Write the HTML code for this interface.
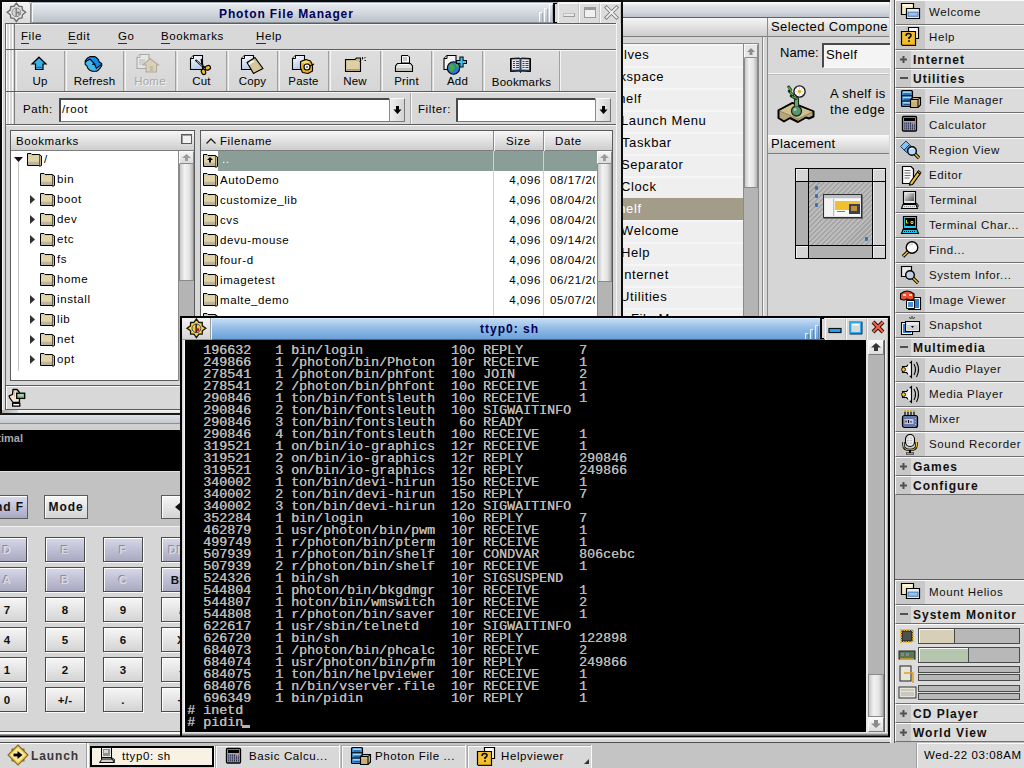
<!DOCTYPE html>
<html><head><meta charset="utf-8"><style>
*{margin:0;padding:0;box-sizing:border-box}
html,body{width:1024px;height:768px;overflow:hidden}
body{position:relative;background:#c0c0c0;font-family:"Liberation Sans",sans-serif;font-size:13px;color:#000}
.a{position:absolute}
.t{position:absolute;white-space:nowrap;line-height:11px;font-size:11.5px;letter-spacing:.6px}
.b{position:absolute;white-space:nowrap;line-height:13px;font-size:12px;font-weight:bold;letter-spacing:1px}
.bev{position:absolute;border-top:1px solid #fafafa;border-left:1px solid #fafafa;border-right:1px solid #8c8c8c;border-bottom:1px solid #8c8c8c}
.sunk{position:absolute;border-top:1px solid #6c6c6c;border-left:1px solid #6c6c6c;border-right:1px solid #f4f4f4;border-bottom:1px solid #f4f4f4}
.grip{position:absolute;left:6px;width:9px;background:repeating-linear-gradient(90deg,#fcfcfc 0 1px,#d6d6d6 1px 3px);border-right:1px solid #7c7c7c}
.hdr{position:absolute;background:linear-gradient(#f6f6f6,#e2e2e2 50%,#cdcdcd);border-bottom:1px solid #7e7e7e}
.vsb{position:absolute;background:linear-gradient(90deg,#c8c8c8,#f2f2f2 35%,#e4e4e4 70%,#b4b4b4);border:1px solid #8a8a8a}
.trk{position:absolute;background:#b4b4b4}
.term{position:absolute;font-family:"Liberation Mono",monospace;font-size:13.33px;line-height:12px;color:#bababa;text-shadow:.4px 0 0 #bababa;white-space:pre}
svg{position:absolute;overflow:visible}
</style></head><body>
<div class="a" style="left:620px;top:0px;width:270px;height:320px;background:#d6d6d6"></div>
<div class="a" style="left:620px;top:0px;width:270px;height:2px;background:#141414"></div>
<div class="a" style="left:623px;top:2px;width:266px;height:16px;background:linear-gradient(#f6f8fa,#e0e3e8 20%,#d2d6dc 70%,#bcc0c8);border-top:1px solid #fafafa;border-bottom:1px solid #5e6268"></div>
<div class="hdr" style="left:622px;top:18px;width:145px;height:19px"></div>
<div class="a" style="left:767px;top:18px;width:1px;height:300px;background:#8a8a8a"></div>
<div class="a" style="left:762px;top:37px;width:1px;height:280px;background:#8a8a8a"></div>
<div class="a" style="left:763px;top:37px;width:1px;height:280px;background:#f4f4f4"></div>
<div class="hdr" style="left:768px;top:18px;width:121px;height:19px"></div>
<div class="t" style="left:771px;top:21px;font-size:13px;line-height:12px;letter-spacing:.4px">Selected Compone</div>
<div class="a" style="left:620px;top:43px;width:124px;height:276px;background:#8a8a8a"></div>
<div class="a" style="left:623px;top:44px;width:120px;height:275px;overflow:hidden">
<div class="a" style="left:0px;top:0px;width:120px;height:22px;background:#efefef;border-top:2px solid #f6f6f6"></div>
<div class="t" style="left:-24px;top:5px;font-size:13px;line-height:12px;letter-spacing:.6px;color:#000">Shelves</div>
<div class="a" style="left:0px;top:22px;width:120px;height:22px;background:#efefef;border-top:2px solid #f6f6f6"></div>
<div class="t" style="left:-29px;top:27px;font-size:13px;line-height:12px;letter-spacing:.6px;color:#000">Workspace</div>
<div class="a" style="left:0px;top:44px;width:120px;height:22px;background:#efefef;border-top:2px solid #f6f6f6"></div>
<div class="t" style="left:-14px;top:49px;font-size:13px;line-height:12px;letter-spacing:.6px;color:#000">Shelf</div>
<div class="a" style="left:0px;top:66px;width:120px;height:22px;background:#efefef;border-top:2px solid #f6f6f6"></div>
<div class="t" style="left:-2px;top:71px;font-size:13px;line-height:12px;letter-spacing:.6px;color:#000">Launch Menu</div>
<div class="a" style="left:0px;top:88px;width:120px;height:22px;background:#efefef;border-top:2px solid #f6f6f6"></div>
<div class="t" style="left:-1px;top:93px;font-size:13px;line-height:12px;letter-spacing:.6px;color:#000">Taskbar</div>
<div class="a" style="left:0px;top:110px;width:120px;height:22px;background:#efefef;border-top:2px solid #f6f6f6"></div>
<div class="t" style="left:-2px;top:115px;font-size:13px;line-height:12px;letter-spacing:.6px;color:#000">Separator</div>
<div class="a" style="left:0px;top:132px;width:120px;height:22px;background:#efefef;border-top:2px solid #f6f6f6"></div>
<div class="t" style="left:-2px;top:137px;font-size:13px;line-height:12px;letter-spacing:.6px;color:#000">Clock</div>
<div class="a" style="left:0px;top:154px;width:120px;height:22px;background:#a29c88;border-top:2px solid #a29c88"></div>
<div class="t" style="left:-14px;top:159px;font-size:13px;line-height:12px;letter-spacing:.6px;color:#fff">Shelf</div>
<div class="a" style="left:0px;top:176px;width:120px;height:22px;background:#efefef;border-top:2px solid #f6f6f6"></div>
<div class="t" style="left:-2px;top:181px;font-size:13px;line-height:12px;letter-spacing:.6px;color:#000">Welcome</div>
<div class="a" style="left:0px;top:198px;width:120px;height:22px;background:#efefef;border-top:2px solid #f6f6f6"></div>
<div class="t" style="left:-2px;top:203px;font-size:13px;line-height:12px;letter-spacing:.6px;color:#000">Help</div>
<div class="a" style="left:0px;top:220px;width:120px;height:22px;background:#efefef;border-top:2px solid #f6f6f6"></div>
<div class="t" style="left:-3px;top:225px;font-size:13px;line-height:12px;letter-spacing:.6px;color:#000">Internet</div>
<div class="a" style="left:0px;top:242px;width:120px;height:22px;background:#efefef;border-top:2px solid #f6f6f6"></div>
<div class="t" style="left:-3px;top:247px;font-size:13px;line-height:12px;letter-spacing:.6px;color:#000">Utilities</div>
<div class="a" style="left:0px;top:264px;width:120px;height:22px;background:#efefef;border-top:2px solid #f6f6f6"></div>
<div class="t" style="left:8px;top:269px;font-size:13px;line-height:12px;letter-spacing:.6px;color:#000">File Manager</div>
</div>
<div class="a" style="left:743px;top:43px;width:16px;height:276px;background:#b4b4b4;border:1px solid #8a8a8a"></div>
<div class="vsb" style="left:744px;top:44px;width:14px;height:144px"></div>
<div class="bev" style="left:744px;top:44px;width:14px;height:14px;background:#e6e6e6"></div>
<svg style="left:747px;top:48px" width="8" height="7"><path d="M4 0 L8 4 L5.5 4 L5.5 7 L2.5 7 L2.5 4 L0 4Z" fill="#8c8c8c"/></svg>
<div class="a" style="left:768px;top:37px;width:121px;height:37px;background:#d8d8d8;border-bottom:1px solid #f4f4f4"></div>
<div class="t" style="left:780px;top:47px;font-size:13px;line-height:12px;letter-spacing:.1px">Name:</div>
<div class="a" style="left:822px;top:43px;width:70px;height:25px;background:#f4f4f4;border-top:2px solid #4a4a4a;border-left:2px solid #4a4a4a;border-bottom:1px solid #fafafa"></div>
<div class="t" style="left:826px;top:49px;font-size:13px;line-height:12px;letter-spacing:.4px">Shelf</div>
<div class="a" style="left:768px;top:74px;width:121px;height:61px;background:#d6d6d6;border-top:1px solid #bcbcbc"></div>
<svg style="left:776px;top:82px" width="42" height="42">
<path d="M2.5 28.5 L16.5 21 L37.5 29.5 L37.5 34.5 L33 36.5 L30 35.5 L22 40 L14 36 L8 39.5 L2.5 36Z" fill="#b8a878" stroke="#000" stroke-width="2" stroke-linejoin="round"/>
<path d="M3.5 28.8 L16.5 22 L36.5 29.8 L22 37Z" fill="#d0c090"/>
<path d="M22 37 V39.5 M3.5 29 L22 37 L36.5 30" stroke="#8a7a58" stroke-width="0.8" fill="none"/>
<circle cx="20.5" cy="29" r="5" fill="#5a9470" stroke="#1a2a1a" stroke-width="1.3"/>
<circle cx="19" cy="27.5" r="1.6" fill="#9ad0a8"/>
<path d="M18.5 24.5 V16 H22.5 V24.5" fill="#6aa480" stroke="#1a2a1a" stroke-width="1.1"/>
<path d="M12 4 L15 8 L13 9 L17 13 L15 14 L21 17" fill="none" stroke="#1a2a1a" stroke-width="2.6" stroke-linejoin="round"/>
<path d="M12.5 5 L15.5 9 M14 10 L17 13 M16 14.5 L21 16.5" stroke="#58b058" stroke-width="1.3"/>
<circle cx="23.5" cy="9.5" r="5.6" fill="#fafafa" stroke="#1a1a1a" stroke-width="1.4"/>
<path d="M23.5 4.5 V14.5 M18.5 9.5 H28.5 M20 6 L27 13 M27 6 L20 13" stroke="#c8c8c8" stroke-width="0.6"/>
<circle cx="23.5" cy="9.5" r="1.7" fill="#f0b010"/>
</svg>
<div class="t" style="left:830px;top:88px;font-size:13px;line-height:12px;letter-spacing:.35px">A shelf is</div>
<div class="t" style="left:830px;top:104px;font-size:13px;line-height:12px;letter-spacing:.6px">the edge</div>
<div class="hdr" style="left:768px;top:135px;width:121px;height:19px;border-top:1px solid #fafafa"></div>
<div class="t" style="left:771px;top:138px;font-size:13px;line-height:12px;letter-spacing:.35px">Placement</div>
<div class="a" style="left:795px;top:168px;width:91px;height:91px;background:#000"></div>
<div class="a" style="left:796px;top:169px;width:12px;height:12px;background:#d6d6d6;border-top:1px solid #f0f0f0;border-left:1px solid #f0f0f0"></div>
<div class="a" style="left:873px;top:169px;width:12px;height:12px;background:#d6d6d6;border-top:1px solid #f0f0f0;border-left:1px solid #f0f0f0"></div>
<div class="a" style="left:796px;top:246px;width:12px;height:12px;background:#d6d6d6;border-top:1px solid #f0f0f0;border-left:1px solid #f0f0f0"></div>
<div class="a" style="left:873px;top:246px;width:12px;height:12px;background:#d6d6d6;border-top:1px solid #f0f0f0;border-left:1px solid #f0f0f0"></div>
<div class="a" style="left:809px;top:169px;width:63px;height:12px;background:#b0b0b0"></div>
<div class="a" style="left:809px;top:246px;width:63px;height:12px;background:#b0b0b0"></div>
<div class="a" style="left:796px;top:182px;width:12px;height:63px;background:#b0b0b0"></div>
<div class="a" style="left:873px;top:182px;width:12px;height:63px;background:#d2d2d2;border-left:1px solid #f0f0f0"></div>
<div class="a" style="left:809px;top:182px;width:63px;height:63px;background:repeating-linear-gradient(135deg,#a4a4a4 0 1.5px,#bcbcbc 1.5px 3.5px)"></div>
<div class="a" style="left:823px;top:194px;width:39px;height:24px;background:#e8e8e8;border:1px solid #303030;box-shadow:1px 1px 0 #707070"></div>
<div class="a" style="left:824px;top:195px;width:37px;height:3px;background:#b8c0cc"></div>
<div class="a" style="left:825px;top:199px;width:9px;height:17px;background:#f4f4f4;border-right:1px solid #c0c0c0"></div>
<div class="a" style="left:835px;top:199px;width:25px;height:17px;background:#fafafa"></div>
<div class="a" style="left:835px;top:201px;width:25px;height:9px;background:#f0c030"></div>
<div class="a" style="left:849px;top:204px;width:11px;height:10px;background:#3a4058"></div>
<div class="a" style="left:851px;top:206px;width:6px;height:5px;background:#c09030"></div>
<div class="a" style="left:837px;top:211px;width:8px;height:1px;background:#6080a0"></div>
<div class="a" style="left:815px;top:186px;width:3px;height:4px;background:#3a70b0;border-radius:1px"></div>
<div class="a" style="left:815px;top:194px;width:3px;height:4px;background:#3a70b0;border-radius:1px"></div>
<div class="a" style="left:815px;top:203px;width:3px;height:4px;background:#3a70b0;border-radius:1px"></div>
<div class="a" style="left:865px;top:237px;width:3px;height:4px;background:#3a70b0;border-radius:1px"></div>
<div class="a" style="left:0px;top:0px;width:623px;height:415px;background:#d8d8d8"></div>
<div class="a" style="left:0px;top:0px;width:623px;height:2px;background:#0c0c0c"></div>
<div class="a" style="left:0px;top:0px;width:2px;height:415px;background:#0c0c0c"></div>
<div class="a" style="left:621px;top:0px;width:2px;height:415px;background:#0c0c0c"></div>
<div class="a" style="left:0px;top:413px;width:623px;height:2px;background:#1a1a1a"></div>
<div class="a" style="left:2px;top:2px;width:619px;height:1px;background:#f0f0f0"></div>
<div class="a" style="left:2px;top:2px;width:1px;height:411px;background:#f8f8f8"></div>
<div class="a" style="left:2px;top:2px;width:28px;height:21px;background:linear-gradient(#f2f2f2,#dadada);border-top:1px solid #fafafa;border-left:1px solid #fafafa;border-radius:0 3px 0 0;box-shadow:1px 0 0 #8a8a8a"></div>
<svg style="left:5px;top:1px" width="24" height="24"><path d="M11.40 2.10 L13.89 5.29 L17.06 5.64 L17.41 8.81 L20.60 11.30 L17.41 13.79 L17.06 16.96 L13.89 17.31 L11.40 20.50 L8.91 17.31 L5.74 16.96 L5.39 13.79 L2.20 11.30 L5.39 8.81 L5.74 5.64 L8.91 5.29Z" fill="#e6e6e6" stroke="#6e6e6e" stroke-width="1.4" stroke-linejoin="miter"/><circle cx="11.4" cy="11.3" r="4.4" fill="#d4d4d4" stroke="#8a8a8a" stroke-width="1"/><path d="M11.2 7 V15.5 M11.2 11.5 H14 V14" stroke="#7a7a7a" stroke-width="1.3" fill="none"/></svg>
<div class="a" style="left:31px;top:2px;width:527px;height:21px;background:linear-gradient(#e8ebf0,#d6dae0 45%,#bcc2ca);border:1px solid #a0acb8;border-bottom-color:#8a9098;box-shadow:inset 1px 1px 0 #fafafa,inset -1px 0 0 #e0e4e8"></div>
<div class="b" style="left:219px;top:8px;color:#000058;letter-spacing:.88px">Photon File Manager</div>
<div class="a" style="left:539px;top:12px;width:4px;height:10px;border-left:1px solid #fafafa;border-top:1px solid #fafafa;border-right:1px solid #a4aab4"></div>
<div class="a" style="left:544px;top:8px;width:4px;height:14px;border-left:1px solid #fafafa;border-top:1px solid #fafafa;border-right:1px solid #a4aab4"></div>
<div class="a" style="left:549px;top:4px;width:4px;height:18px;border-left:1px solid #fafafa;border-top:1px solid #fafafa;border-right:1px solid #a4aab4"></div>
<div class="a" style="left:553px;top:3px;width:5px;height:20px;background:#d8d8d8"></div>
<div class="a" style="left:553px;top:3px;width:2px;height:20px;background:#000;border-radius:2px 0 0 2px"></div>
<div class="a" style="left:553px;top:3px;width:4px;height:1px;background:#000"></div>
<div class="a" style="left:553px;top:22px;width:4px;height:1px;background:#000"></div>
<div class="a" style="left:558px;top:3px;width:21px;height:20px;background:#dcdcdc;border-top:1px solid #fafafa;border-left:1px solid #fafafa;border-right:1px solid #c4c4c4"></div>
<div class="a" style="left:579px;top:3px;width:21px;height:20px;background:#dcdcdc;border-top:1px solid #fafafa;border-left:1px solid #fafafa;border-right:1px solid #c4c4c4"></div>
<div class="a" style="left:600px;top:3px;width:21px;height:20px;background:#dcdcdc;border-top:1px solid #fafafa;border-left:1px solid #fafafa;border-right:1px solid #c4c4c4"></div>
<div class="a" style="left:563px;top:13px;width:12px;height:4px;background:#e8e8e8;border:1px solid #9a9a9a;border-top-color:#c0c0c0;border-left-color:#c0c0c0"></div>
<div class="a" style="left:584px;top:7px;width:12px;height:11px;background:#f0f0f0;border:1px solid #9a9a9a;border-top:3px solid #9a9a9a"></div>
<svg style="left:604px;top:5px" width="15" height="15"><path d="M2.5 2.5 L12.5 12.5 M12.5 2.5 L2.5 12.5" stroke="#7a7a7a" stroke-width="3.6" stroke-linecap="square"/><path d="M2.5 2.5 L12.5 12.5 M12.5 2.5 L2.5 12.5" stroke="#f0f0f0" stroke-width="1.8" stroke-linecap="square"/></svg>
<div class="a" style="left:5px;top:23px;width:612px;height:1px;background:#5c5c5c"></div>
<div class="a" style="left:5px;top:23px;width:1px;height:362px;background:#6a6a6a"></div>
<div class="a" style="left:616px;top:23px;width:1px;height:362px;background:#f4f4f4"></div>
<div class="a" style="left:6px;top:24px;width:610px;height:25px;background:#d8d8d8;border-top:1px solid #f6f6f6"></div>
<div class="grip" style="top:24px;height:25px"></div>
<div class="t" style="left:21px;top:31px;">File</div>
<div class="t" style="left:68px;top:31px;">Edit</div>
<div class="t" style="left:118px;top:31px;">Go</div>
<div class="t" style="left:161px;top:31px;">Bookmarks</div>
<div class="t" style="left:256px;top:31px;">Help</div>
<div class="a" style="left:21px;top:43px;width:8px;height:1px;background:#303030"></div>
<div class="a" style="left:68px;top:43px;width:9px;height:1px;background:#303030"></div>
<div class="a" style="left:118px;top:43px;width:9px;height:1px;background:#303030"></div>
<div class="a" style="left:161px;top:43px;width:9px;height:1px;background:#303030"></div>
<div class="a" style="left:256px;top:43px;width:10px;height:1px;background:#303030"></div>
<div class="a" style="left:6px;top:49px;width:610px;height:1px;background:#5c5c5c"></div>
<div class="a" style="left:6px;top:50px;width:610px;height:42px;background:#d8d8d8;border-top:1px solid #f6f6f6"></div>
<div class="grip" style="top:50px;height:42px"></div>
<div class="a" style="left:16px;top:51px;width:49px;height:40px;background:linear-gradient(#dedede,#d6d6d6);border-left:1px solid #f4f4f4;border-right:1px solid #a0a0a0"></div>
<div class="t" style="left:15px;top:76px;width:50px;text-align:center;color:#000;letter-spacing:0.2px">Up</div>
<div class="a" style="left:66px;top:51px;width:58px;height:40px;background:linear-gradient(#dedede,#d6d6d6);border-left:1px solid #f4f4f4;border-right:1px solid #a0a0a0"></div>
<div class="t" style="left:65px;top:76px;width:59px;text-align:center;color:#000;letter-spacing:0.2px">Refresh</div>
<div class="a" style="left:125px;top:51px;width:51px;height:40px;background:linear-gradient(#dedede,#d6d6d6);border-left:1px solid #f4f4f4;border-right:1px solid #a0a0a0"></div>
<div class="t" style="left:124px;top:76px;width:52px;text-align:center;color:#a8a8a8;text-shadow:1px 1px 0 #f4f4f4;letter-spacing:0.2px">Home</div>
<div class="a" style="left:177px;top:51px;width:50px;height:40px;background:linear-gradient(#dedede,#d6d6d6);border-left:1px solid #f4f4f4;border-right:1px solid #a0a0a0"></div>
<div class="t" style="left:176px;top:76px;width:51px;text-align:center;color:#000;letter-spacing:0.2px">Cut</div>
<div class="a" style="left:228px;top:51px;width:50px;height:40px;background:linear-gradient(#dedede,#d6d6d6);border-left:1px solid #f4f4f4;border-right:1px solid #a0a0a0"></div>
<div class="t" style="left:227px;top:76px;width:51px;text-align:center;color:#000;letter-spacing:0.2px">Copy</div>
<div class="a" style="left:279px;top:51px;width:50px;height:40px;background:linear-gradient(#dedede,#d6d6d6);border-left:1px solid #f4f4f4;border-right:1px solid #a0a0a0"></div>
<div class="t" style="left:278px;top:76px;width:51px;text-align:center;color:#000;letter-spacing:0.2px">Paste</div>
<div class="a" style="left:330px;top:51px;width:51px;height:40px;background:linear-gradient(#dedede,#d6d6d6);border-left:1px solid #f4f4f4;border-right:1px solid #a0a0a0"></div>
<div class="t" style="left:329px;top:76px;width:52px;text-align:center;color:#000;letter-spacing:0.2px">New</div>
<div class="a" style="left:382px;top:51px;width:50px;height:40px;background:linear-gradient(#dedede,#d6d6d6);border-left:1px solid #f4f4f4;border-right:1px solid #a0a0a0"></div>
<div class="t" style="left:381px;top:76px;width:51px;text-align:center;color:#000;letter-spacing:0.2px">Print</div>
<div class="a" style="left:433px;top:51px;width:50px;height:40px;background:linear-gradient(#dedede,#d6d6d6);border-left:1px solid #f4f4f4;border-right:1px solid #a0a0a0"></div>
<div class="t" style="left:432px;top:76px;width:51px;text-align:center;color:#000;letter-spacing:0.2px">Add</div>
<div class="a" style="left:484px;top:51px;width:76px;height:40px;background:linear-gradient(#dedede,#d6d6d6);border-left:1px solid #f4f4f4;border-right:1px solid #a0a0a0"></div>
<div class="t" style="left:483px;top:77px;width:77px;text-align:center;color:#000;letter-spacing:0.2px">Bookmarks</div>
<div class="a" style="left:560px;top:51px;width:56px;height:40px;background:#d8d8d8;border-left:1px solid #f4f4f4"></div>
<div class="a" style="left:6px;top:91px;width:610px;height:1px;background:#5c5c5c"></div>
<svg width="0" height="0" style="left:0;top:0"><defs><linearGradient id="dg" x1="0" y1="0" x2="0.3" y2="1"><stop offset="0" stop-color="#ffffff"/><stop offset="1" stop-color="#b8cce8"/></linearGradient></defs></svg>
<svg style="left:31px;top:56px" width="18" height="16"><path d="M8 1.2 L15 8 L12 8 L12 13.5 L4.5 13.5 L4.5 8 L1 8Z" fill="#38b0e8" stroke="#000" stroke-width="1.2"/><rect x="5.2" y="10.8" width="6.2" height="1.3" fill="#2a6890"/></svg>
<svg style="left:85px;top:56px" width="18" height="17"><path d="M5.3 0.6 L9.6 0.6 L11.4 1.6 L13.4 3.6 L14.3 6 L16.7 7.4 L16.7 9.8 L14.9 12.4 L13.2 14.2 L11.4 15.3 L7.3 15.3 L4.7 14.2 L2.9 12.4 L2 10.1 L0.2 8.3 L0.2 4.8 L2.6 1.9Z" fill="#0c8cf0"/><path d="M0.3 5.7 L5 3 L9.4 7.7 L11.4 12.4 L16.1 8.6 L16.7 9.8 L14.9 12.4 L13.2 14.2 L11.4 15.3 L7.3 15.3 L4.7 14.2 L2.9 12.4 L2 10.1 L0.2 8.3Z" fill="#40b8f0"/><path d="M1.5 4.2 L5 2 L9 5 L5 1.2Z" fill="#58c8f8"/><path d="M0.3 5.7 L5 3 L9.4 7.7 L7.3 8.6 M9.4 7.7 L11.4 12.4 L16.1 8.6" fill="none" stroke="#000" stroke-width="1.2"/><path d="M5.3 0.6 L9.6 0.6 L11.4 1.6 L13.4 3.6 L14.3 6 L16.7 7.4 L16.7 9.8 L14.9 12.4 L13.2 14.2 L11.4 15.3 L7.3 15.3 L4.7 14.2 L2.9 12.4 L2 10.1 L0.2 8.3 L0.2 4.8 L2.6 1.9Z" fill="none" stroke="#000" stroke-width="1.1" stroke-linejoin="round"/></svg>
<svg style="left:136px;top:54px" width="24" height="20"><path d="M4.0 0.5 H13.0 V14.5 H1.0 V3.5Z" fill="#e6e6e6" stroke="#a8a8a8" stroke-width="1.1"/><path d="M1.0 3.5 H4.0 V0.5" fill="#eef2f8" stroke="#a8a8a8" stroke-width="1"/><path d="M3 6h6M3 8h6M3 10h5" stroke="#b8b8b8"/><path d="M7 11 L14 4.5 L22.5 11 L20.5 11 L20.5 18 L10 18 L10 11Z" fill="#d8d0b8" stroke="#b4ac98" stroke-width="1.1"/><path d="M14 12h3v6h-3z" fill="#c4bca4"/></svg>
<svg style="left:189px;top:55px" width="24" height="20"><path d="M4.5 0.5 H13.5 V14.5 H1.5 V3.5Z" fill="url(#dg)" stroke="#000" stroke-width="1.1"/><path d="M1.5 3.5 H4.5 V0.5" fill="#eef2f8" stroke="#000" stroke-width="1"/><path d="M6.5 5 L14 11.5 M12.5 4 L13.5 11" stroke="#000" stroke-width="1.8"/><path d="M7.5 5.8 L13.5 11" stroke="#f0f0f0" stroke-width="0.7"/><ellipse cx="18.8" cy="12.8" rx="2.8" ry="2.2" fill="#f0c020" stroke="#000" stroke-width="1.1" transform="rotate(-20 18.8 12.8)"/><ellipse cx="14.5" cy="16.8" rx="2.1" ry="2.8" fill="#f0c020" stroke="#000" stroke-width="1.1" transform="rotate(-20 14.5 16.8)"/><path d="M13.5 11 L16.2 12.3 M13.5 11 L14.3 14" stroke="#000" stroke-width="1.4"/></svg>
<svg style="left:240px;top:55px" width="26" height="20"><path d="M4.5 0.5 H13.5 V14.5 H1.5 V3.5Z" fill="url(#dg)" stroke="#000" stroke-width="1.1"/><path d="M1.5 3.5 H4.5 V0.5" fill="#eef2f8" stroke="#000" stroke-width="1"/><path d="M7 7.5 L15 2.5 L23 13.5 L13.5 18.5Z" fill="#c4b488" stroke="#000" stroke-width="1.1" stroke-linejoin="round"/><path d="M9 8 L14.5 4.5 L21 13.5 L14 17Z" fill="#d4c8a0"/><path d="M9 9.5 Q11 6 14 6.5" fill="none" stroke="#fafafa" stroke-width="1.6"/></svg>
<svg style="left:291px;top:55px" width="26" height="20"><path d="M4.5 0.5 H13.5 V14.5 H1.5 V3.5Z" fill="url(#dg)" stroke="#000" stroke-width="1.1"/><path d="M1.5 3.5 H4.5 V0.5" fill="#eef2f8" stroke="#000" stroke-width="1"/><path d="M9.5 6.5 L15 4.5 L19.5 6 L21.5 10 L21.5 16 L17 18.5 L11.5 17.5 L9.5 13Z" fill="#e4b020" stroke="#000" stroke-width="1.1" stroke-linejoin="round"/><path d="M10.5 7.5 L15 5.5 L19 7 L14 9Z" fill="#f8e070"/><circle cx="16" cy="12" r="3" fill="#fafafa" stroke="#000" stroke-width="1.2"/><circle cx="16" cy="12" r="1" fill="#606060"/><path d="M19 11 L23 9" stroke="#000" stroke-width="1.2"/></svg>
<svg style="left:345px;top:56px" width="22" height="17"><path d="M0.5 3.5 H10 L11.5 2 H15.5 V15.5 H0.5Z" fill="#c8b888" stroke="#000" stroke-width="1.1"/><path d="M1.5 5 H14.5 V13 H1.5Z" fill="#dcd0a4"/><path d="M1.5 13 H14.5 V14.5 H1.5Z" fill="#a89c74"/><path d="M17.5 1 V3.5 M16 4.5 L14.5 6 M19.5 4.5 H21 M19 2.5 L20.5 1" stroke="#000" stroke-width="0.9"/></svg>
<svg style="left:395px;top:55px" width="20" height="18"><path d="M6.5 0.5 H13 L14.5 2 V8 H6.5Z" fill="#f4f4f4" stroke="#000" stroke-width="1"/><path d="M8 3h4M8 5h4" stroke="#888" stroke-width="0.8"/><path d="M2.5 8.5 H15.5 L17.5 11 V16.5 H0.5 V11Z" fill="#e4e4e0" stroke="#000" stroke-width="1.1"/><path d="M1 13 H17 V16 H1Z" fill="#c0c0b8"/><path d="M3 9.5h11" stroke="#fff"/></svg>
<svg style="left:443px;top:55px" width="26" height="20"><path d="M4.0 0.5 H13.0 V14.5 H1.0 V3.5Z" fill="#f4f4f4" stroke="#000" stroke-width="1.1"/><path d="M1.0 3.5 H4.0 V0.5" fill="#eef2f8" stroke="#000" stroke-width="1"/><circle cx="10.5" cy="13" r="6.2" fill="#2a78d0" stroke="#000" stroke-width="1.1"/><path d="M6 10 Q9 8 11 10 L12 13 L9 17 L6.5 15Z" fill="#48a838"/><path d="M12 8.5 L14 8 L16 11 L14 13Z" fill="#48a838"/><path d="M18.5 1.5 V12.5 M13 7 H24" stroke="#000" stroke-width="4.2"/><path d="M18.5 2.5 V11.5 M14 7 H23" stroke="#38c0f0" stroke-width="2.2"/></svg>
<svg style="left:510px;top:57px" width="21" height="16"><path d="M0.5 1.5 L9.5 1 L10.5 2 L11.5 1 L20.5 1.5 V14.5 L11.5 14 L10.5 15.5 L9.5 14 L0.5 14.5Z" fill="#2a4868" stroke="#000" stroke-width="1"/><path d="M2 2.5 L9.5 2.2 V12.5 L2 12.8Z M11.5 2.2 L19 2.5 V12.8 L11.5 12.5Z" fill="#e4e4e8"/><path d="M3 4.5h2M6 4.5h3M3 6.5h2M6 6.5h3M3 8.5h2M6 8.5h3M3 10.5h2M6 10.5h3M12.5 4.5h2M15.5 4.5h3M12.5 6.5h2M15.5 6.5h3M12.5 8.5h2M15.5 8.5h3M12.5 10.5h2M15.5 10.5h3" stroke="#404858" stroke-width="1"/></svg>
<div class="a" style="left:6px;top:92px;width:610px;height:33px;background:#d8d8d8;border-top:1px solid #f6f6f6"></div>
<div class="grip" style="top:92px;height:33px"></div>
<div class="t" style="left:23px;top:104px;">Path:</div>
<div class="a" style="left:59px;top:98px;width:346px;height:24px;background:#fff;border-top:2px solid #4a4a4a;border-left:2px solid #4a4a4a;border-bottom:1px solid #7a7a7a"></div>
<div class="t" style="left:62px;top:104px;">/root</div>
<div class="a" style="left:389px;top:98px;width:16px;height:24px;background:linear-gradient(90deg,#f0f0f0,#d4d4d4);border:1px solid #fafafa;border-right-color:#7a7a7a;border-bottom-color:#7a7a7a;border-left-color:#8a8a8a"></div>
<svg style="left:393px;top:106px" width="9" height="9"><path d="M3 0 L6 0 L6 3.5 L8.5 3.5 L4.5 8 L0.5 3.5 L3 3.5Z" fill="#000"/></svg>
<div class="a" style="left:410px;top:93px;width:1px;height:31px;background:#a8a8a8"></div>
<div class="a" style="left:411px;top:93px;width:1px;height:31px;background:#f8f8f8"></div>
<div class="t" style="left:418px;top:104px;">Filter:</div>
<div class="a" style="left:456px;top:98px;width:155px;height:24px;background:#fff;border-top:2px solid #4a4a4a;border-left:2px solid #4a4a4a;border-bottom:1px solid #7a7a7a"></div>
<div class="a" style="left:595px;top:98px;width:16px;height:24px;background:linear-gradient(90deg,#f0f0f0,#d4d4d4);border:1px solid #fafafa;border-right-color:#7a7a7a;border-bottom-color:#7a7a7a;border-left-color:#8a8a8a"></div>
<svg style="left:599px;top:106px" width="9" height="9"><path d="M3 0 L6 0 L6 3.5 L8.5 3.5 L4.5 8 L0.5 3.5 L3 3.5Z" fill="#000"/></svg>
<div class="a" style="left:6px;top:124px;width:610px;height:1px;background:#5c5c5c"></div>
<div class="a" style="left:6px;top:125px;width:610px;height:260px;background:#d8d8d8;border-top:1px solid #f6f6f6"></div>
<div class="a" style="left:10px;top:130px;width:185px;height:251px;background:#fff;border:1px solid #5a5a5a"></div>
<div class="hdr" style="left:11px;top:131px;width:183px;height:20px"></div>
<div class="t" style="left:16px;top:136px;">Bookmarks</div>
<div class="a" style="left:181px;top:134px;width:11px;height:10px;background:#f0f0f0;border:1px solid #5a5a5a;box-shadow:inset 1px 1px 0 #a0a0a0"></div>
<div class="a" style="left:178px;top:151px;width:16px;height:230px;background:#b4b4b4;border-left:1px solid #8a8a8a"></div>
<div class="vsb" style="left:179px;top:151px;width:15px;height:130px"></div>
<div class="a" style="left:179px;top:151px;width:15px;height:13px;background:linear-gradient(#f4f4f4,#dcdcdc);border:1px solid #fafafa;border-right-color:#8a8a8a;border-bottom-color:#8a8a8a"></div>
<svg style="left:182px;top:154px" width="9" height="7"><path d="M4.5 0 L9 4 L6 4 L6 7 L3 7 L3 4 L0 4Z" fill="#9c9c9c"/></svg>
<div class="a" style="left:18px;top:162px;width:1px;height:209px;background:#c4c4c4"></div>
<svg style="left:14px;top:157px" width="10" height="6"><path d="M0 0 L9 0 L4.5 5Z" fill="#111"/></svg>
<svg style="left:27px;top:153px" width="16" height="14"><path d="M0.5 0.5 H4 L5 1.5 H12.5 V12.5 H0.5Z" fill="#d8c898" stroke="#000" stroke-width="1"/><path d="M1 2 H4" stroke="#a8d0e0" stroke-width="1"/><path d="M1 2.5 H12 V8.5 H1Z" fill="#e0d4a8"/><path d="M1 9 H12 V12 H1Z" fill="#bcb49c"/><path d="M12.5 1.8 L14.5 3 V12.5 L12.5 13.5" fill="#c8b888" stroke="#000" stroke-width="1"/><path d="M1 12.5 H12.5" stroke="#000"/></svg>
<div class="t" style="left:44px;top:154px;">/</div>
<svg style="left:40px;top:173px" width="16" height="14"><path d="M0.5 0.5 H4 L5 1.5 H12.5 V12.5 H0.5Z" fill="#d8c898" stroke="#000" stroke-width="1"/><path d="M1 2 H4" stroke="#a8d0e0" stroke-width="1"/><path d="M1 2.5 H12 V8.5 H1Z" fill="#e0d4a8"/><path d="M1 9 H12 V12 H1Z" fill="#bcb49c"/><path d="M12.5 1.8 L14.5 3 V12.5 L12.5 13.5" fill="#c8b888" stroke="#000" stroke-width="1"/><path d="M1 12.5 H12.5" stroke="#000"/></svg>
<div class="t" style="left:57px;top:174px;">bin</div>
<svg style="left:30px;top:195px" width="6" height="9"><path d="M0 0 L5 4.5 L0 9Z" fill="#303030"/></svg>
<svg style="left:40px;top:193px" width="16" height="14"><path d="M0.5 0.5 H4 L5 1.5 H12.5 V12.5 H0.5Z" fill="#d8c898" stroke="#000" stroke-width="1"/><path d="M1 2 H4" stroke="#a8d0e0" stroke-width="1"/><path d="M1 2.5 H12 V8.5 H1Z" fill="#e0d4a8"/><path d="M1 9 H12 V12 H1Z" fill="#bcb49c"/><path d="M12.5 1.8 L14.5 3 V12.5 L12.5 13.5" fill="#c8b888" stroke="#000" stroke-width="1"/><path d="M1 12.5 H12.5" stroke="#000"/></svg>
<div class="t" style="left:57px;top:194px;">boot</div>
<svg style="left:30px;top:215px" width="6" height="9"><path d="M0 0 L5 4.5 L0 9Z" fill="#303030"/></svg>
<svg style="left:40px;top:213px" width="16" height="14"><path d="M0.5 0.5 H4 L5 1.5 H12.5 V12.5 H0.5Z" fill="#d8c898" stroke="#000" stroke-width="1"/><path d="M1 2 H4" stroke="#a8d0e0" stroke-width="1"/><path d="M1 2.5 H12 V8.5 H1Z" fill="#e0d4a8"/><path d="M1 9 H12 V12 H1Z" fill="#bcb49c"/><path d="M12.5 1.8 L14.5 3 V12.5 L12.5 13.5" fill="#c8b888" stroke="#000" stroke-width="1"/><path d="M1 12.5 H12.5" stroke="#000"/></svg>
<div class="t" style="left:57px;top:214px;">dev</div>
<svg style="left:30px;top:235px" width="6" height="9"><path d="M0 0 L5 4.5 L0 9Z" fill="#303030"/></svg>
<svg style="left:40px;top:233px" width="16" height="14"><path d="M0.5 0.5 H4 L5 1.5 H12.5 V12.5 H0.5Z" fill="#d8c898" stroke="#000" stroke-width="1"/><path d="M1 2 H4" stroke="#a8d0e0" stroke-width="1"/><path d="M1 2.5 H12 V8.5 H1Z" fill="#e0d4a8"/><path d="M1 9 H12 V12 H1Z" fill="#bcb49c"/><path d="M12.5 1.8 L14.5 3 V12.5 L12.5 13.5" fill="#c8b888" stroke="#000" stroke-width="1"/><path d="M1 12.5 H12.5" stroke="#000"/></svg>
<div class="t" style="left:57px;top:234px;">etc</div>
<svg style="left:40px;top:253px" width="16" height="14"><path d="M0.5 0.5 H4 L5 1.5 H12.5 V12.5 H0.5Z" fill="#d8c898" stroke="#000" stroke-width="1"/><path d="M1 2 H4" stroke="#a8d0e0" stroke-width="1"/><path d="M1 2.5 H12 V8.5 H1Z" fill="#e0d4a8"/><path d="M1 9 H12 V12 H1Z" fill="#bcb49c"/><path d="M12.5 1.8 L14.5 3 V12.5 L12.5 13.5" fill="#c8b888" stroke="#000" stroke-width="1"/><path d="M1 12.5 H12.5" stroke="#000"/></svg>
<div class="t" style="left:57px;top:254px;">fs</div>
<svg style="left:40px;top:273px" width="16" height="14"><path d="M0.5 0.5 H4 L5 1.5 H12.5 V12.5 H0.5Z" fill="#d8c898" stroke="#000" stroke-width="1"/><path d="M1 2 H4" stroke="#a8d0e0" stroke-width="1"/><path d="M1 2.5 H12 V8.5 H1Z" fill="#e0d4a8"/><path d="M1 9 H12 V12 H1Z" fill="#bcb49c"/><path d="M12.5 1.8 L14.5 3 V12.5 L12.5 13.5" fill="#c8b888" stroke="#000" stroke-width="1"/><path d="M1 12.5 H12.5" stroke="#000"/></svg>
<div class="t" style="left:57px;top:274px;">home</div>
<svg style="left:30px;top:295px" width="6" height="9"><path d="M0 0 L5 4.5 L0 9Z" fill="#303030"/></svg>
<svg style="left:40px;top:293px" width="16" height="14"><path d="M0.5 0.5 H4 L5 1.5 H12.5 V12.5 H0.5Z" fill="#d8c898" stroke="#000" stroke-width="1"/><path d="M1 2 H4" stroke="#a8d0e0" stroke-width="1"/><path d="M1 2.5 H12 V8.5 H1Z" fill="#e0d4a8"/><path d="M1 9 H12 V12 H1Z" fill="#bcb49c"/><path d="M12.5 1.8 L14.5 3 V12.5 L12.5 13.5" fill="#c8b888" stroke="#000" stroke-width="1"/><path d="M1 12.5 H12.5" stroke="#000"/></svg>
<div class="t" style="left:57px;top:294px;">install</div>
<svg style="left:30px;top:315px" width="6" height="9"><path d="M0 0 L5 4.5 L0 9Z" fill="#303030"/></svg>
<svg style="left:40px;top:313px" width="16" height="14"><path d="M0.5 0.5 H4 L5 1.5 H12.5 V12.5 H0.5Z" fill="#d8c898" stroke="#000" stroke-width="1"/><path d="M1 2 H4" stroke="#a8d0e0" stroke-width="1"/><path d="M1 2.5 H12 V8.5 H1Z" fill="#e0d4a8"/><path d="M1 9 H12 V12 H1Z" fill="#bcb49c"/><path d="M12.5 1.8 L14.5 3 V12.5 L12.5 13.5" fill="#c8b888" stroke="#000" stroke-width="1"/><path d="M1 12.5 H12.5" stroke="#000"/></svg>
<div class="t" style="left:57px;top:314px;">lib</div>
<svg style="left:30px;top:335px" width="6" height="9"><path d="M0 0 L5 4.5 L0 9Z" fill="#303030"/></svg>
<svg style="left:40px;top:333px" width="16" height="14"><path d="M0.5 0.5 H4 L5 1.5 H12.5 V12.5 H0.5Z" fill="#d8c898" stroke="#000" stroke-width="1"/><path d="M1 2 H4" stroke="#a8d0e0" stroke-width="1"/><path d="M1 2.5 H12 V8.5 H1Z" fill="#e0d4a8"/><path d="M1 9 H12 V12 H1Z" fill="#bcb49c"/><path d="M12.5 1.8 L14.5 3 V12.5 L12.5 13.5" fill="#c8b888" stroke="#000" stroke-width="1"/><path d="M1 12.5 H12.5" stroke="#000"/></svg>
<div class="t" style="left:57px;top:334px;">net</div>
<svg style="left:30px;top:355px" width="6" height="9"><path d="M0 0 L5 4.5 L0 9Z" fill="#303030"/></svg>
<svg style="left:40px;top:353px" width="16" height="14"><path d="M0.5 0.5 H4 L5 1.5 H12.5 V12.5 H0.5Z" fill="#d8c898" stroke="#000" stroke-width="1"/><path d="M1 2 H4" stroke="#a8d0e0" stroke-width="1"/><path d="M1 2.5 H12 V8.5 H1Z" fill="#e0d4a8"/><path d="M1 9 H12 V12 H1Z" fill="#bcb49c"/><path d="M12.5 1.8 L14.5 3 V12.5 L12.5 13.5" fill="#c8b888" stroke="#000" stroke-width="1"/><path d="M1 12.5 H12.5" stroke="#000"/></svg>
<div class="t" style="left:57px;top:354px;">opt</div>
<div class="a" style="left:200px;top:130px;width:413px;height:200px;background:#fff;border:1px solid #5a5a5a"></div>
<div class="hdr" style="left:201px;top:131px;width:411px;height:20px"></div>
<svg style="left:206px;top:138px" width="10" height="6"><path d="M0.5 5.5 L5 1 L9.5 5.5" fill="none" stroke="#222" stroke-width="1.3"/></svg>
<div class="t" style="left:220px;top:136px;">Filename</div>
<div class="a" style="left:493px;top:131px;width:1px;height:20px;background:#8a8a8a"></div>
<div class="a" style="left:494px;top:131px;width:1px;height:20px;background:#fafafa"></div>
<div class="t" style="left:506px;top:136px;">Size</div>
<div class="a" style="left:543px;top:131px;width:1px;height:20px;background:#8a8a8a"></div>
<div class="a" style="left:544px;top:131px;width:1px;height:20px;background:#fafafa"></div>
<div class="t" style="left:555px;top:136px;">Date</div>
<div class="a" style="left:218px;top:151px;width:379px;height:20px;background:#8b9d97"></div>
<div class="a" style="left:493px;top:151px;width:1px;height:180px;background:#d0d0d0"></div>
<div class="a" style="left:543px;top:151px;width:1px;height:180px;background:#d0d0d0"></div>
<svg style="left:203px;top:154px" width="16" height="14"><path d="M0.5 0.5 H4 L5 1.5 H12.5 V12.5 H0.5Z" fill="#d8c898" stroke="#000" stroke-width="1"/><path d="M1 2 H4" stroke="#a8d0e0" stroke-width="1"/><path d="M1 2.5 H12 V8.5 H1Z" fill="#e0d4a8"/><path d="M1 9 H12 V12 H1Z" fill="#bcb49c"/><path d="M12.5 1.8 L14.5 3 V12.5 L12.5 13.5" fill="#c8b888" stroke="#000" stroke-width="1"/><path d="M1 12.5 H12.5" stroke="#000"/><path d="M7 3 L10 6 L8 6 L8 8.5 L6 8.5 L6 6 L4 6Z" fill="#000"/></svg>
<div class="t" style="left:222px;top:154px;color:#fff">..</div>
<svg style="left:203px;top:173px" width="16" height="14"><path d="M0.5 0.5 H4 L5 1.5 H12.5 V12.5 H0.5Z" fill="#d8c898" stroke="#000" stroke-width="1"/><path d="M1 2 H4" stroke="#a8d0e0" stroke-width="1"/><path d="M1 2.5 H12 V8.5 H1Z" fill="#e0d4a8"/><path d="M1 9 H12 V12 H1Z" fill="#bcb49c"/><path d="M12.5 1.8 L14.5 3 V12.5 L12.5 13.5" fill="#c8b888" stroke="#000" stroke-width="1"/><path d="M1 12.5 H12.5" stroke="#000"/></svg>
<div class="t" style="left:220px;top:175px;">AutoDemo</div>
<div class="t" style="left:494px;top:175px;width:47px;text-align:right">4,096</div>
<div class="t" style="left:550px;top:175px;width:45px;overflow:hidden">08/17/20</div>
<svg style="left:203px;top:193px" width="16" height="14"><path d="M0.5 0.5 H4 L5 1.5 H12.5 V12.5 H0.5Z" fill="#d8c898" stroke="#000" stroke-width="1"/><path d="M1 2 H4" stroke="#a8d0e0" stroke-width="1"/><path d="M1 2.5 H12 V8.5 H1Z" fill="#e0d4a8"/><path d="M1 9 H12 V12 H1Z" fill="#bcb49c"/><path d="M12.5 1.8 L14.5 3 V12.5 L12.5 13.5" fill="#c8b888" stroke="#000" stroke-width="1"/><path d="M1 12.5 H12.5" stroke="#000"/></svg>
<div class="t" style="left:220px;top:195px;">customize_lib</div>
<div class="t" style="left:494px;top:195px;width:47px;text-align:right">4,096</div>
<div class="t" style="left:550px;top:195px;width:45px;overflow:hidden">08/04/20</div>
<svg style="left:203px;top:213px" width="16" height="14"><path d="M0.5 0.5 H4 L5 1.5 H12.5 V12.5 H0.5Z" fill="#d8c898" stroke="#000" stroke-width="1"/><path d="M1 2 H4" stroke="#a8d0e0" stroke-width="1"/><path d="M1 2.5 H12 V8.5 H1Z" fill="#e0d4a8"/><path d="M1 9 H12 V12 H1Z" fill="#bcb49c"/><path d="M12.5 1.8 L14.5 3 V12.5 L12.5 13.5" fill="#c8b888" stroke="#000" stroke-width="1"/><path d="M1 12.5 H12.5" stroke="#000"/></svg>
<div class="t" style="left:220px;top:215px;">cvs</div>
<div class="t" style="left:494px;top:215px;width:47px;text-align:right">4,096</div>
<div class="t" style="left:550px;top:215px;width:45px;overflow:hidden">08/04/20</div>
<svg style="left:203px;top:233px" width="16" height="14"><path d="M0.5 0.5 H4 L5 1.5 H12.5 V12.5 H0.5Z" fill="#d8c898" stroke="#000" stroke-width="1"/><path d="M1 2 H4" stroke="#a8d0e0" stroke-width="1"/><path d="M1 2.5 H12 V8.5 H1Z" fill="#e0d4a8"/><path d="M1 9 H12 V12 H1Z" fill="#bcb49c"/><path d="M12.5 1.8 L14.5 3 V12.5 L12.5 13.5" fill="#c8b888" stroke="#000" stroke-width="1"/><path d="M1 12.5 H12.5" stroke="#000"/></svg>
<div class="t" style="left:220px;top:235px;">devu-mouse</div>
<div class="t" style="left:494px;top:235px;width:47px;text-align:right">4,096</div>
<div class="t" style="left:550px;top:235px;width:45px;overflow:hidden">09/14/20</div>
<svg style="left:203px;top:253px" width="16" height="14"><path d="M0.5 0.5 H4 L5 1.5 H12.5 V12.5 H0.5Z" fill="#d8c898" stroke="#000" stroke-width="1"/><path d="M1 2 H4" stroke="#a8d0e0" stroke-width="1"/><path d="M1 2.5 H12 V8.5 H1Z" fill="#e0d4a8"/><path d="M1 9 H12 V12 H1Z" fill="#bcb49c"/><path d="M12.5 1.8 L14.5 3 V12.5 L12.5 13.5" fill="#c8b888" stroke="#000" stroke-width="1"/><path d="M1 12.5 H12.5" stroke="#000"/></svg>
<div class="t" style="left:220px;top:255px;">four-d</div>
<div class="t" style="left:494px;top:255px;width:47px;text-align:right">4,096</div>
<div class="t" style="left:550px;top:255px;width:45px;overflow:hidden">08/04/20</div>
<svg style="left:203px;top:273px" width="16" height="14"><path d="M0.5 0.5 H4 L5 1.5 H12.5 V12.5 H0.5Z" fill="#d8c898" stroke="#000" stroke-width="1"/><path d="M1 2 H4" stroke="#a8d0e0" stroke-width="1"/><path d="M1 2.5 H12 V8.5 H1Z" fill="#e0d4a8"/><path d="M1 9 H12 V12 H1Z" fill="#bcb49c"/><path d="M12.5 1.8 L14.5 3 V12.5 L12.5 13.5" fill="#c8b888" stroke="#000" stroke-width="1"/><path d="M1 12.5 H12.5" stroke="#000"/></svg>
<div class="t" style="left:220px;top:275px;">imagetest</div>
<div class="t" style="left:494px;top:275px;width:47px;text-align:right">4,096</div>
<div class="t" style="left:550px;top:275px;width:45px;overflow:hidden">06/21/20</div>
<svg style="left:203px;top:293px" width="16" height="14"><path d="M0.5 0.5 H4 L5 1.5 H12.5 V12.5 H0.5Z" fill="#d8c898" stroke="#000" stroke-width="1"/><path d="M1 2 H4" stroke="#a8d0e0" stroke-width="1"/><path d="M1 2.5 H12 V8.5 H1Z" fill="#e0d4a8"/><path d="M1 9 H12 V12 H1Z" fill="#bcb49c"/><path d="M12.5 1.8 L14.5 3 V12.5 L12.5 13.5" fill="#c8b888" stroke="#000" stroke-width="1"/><path d="M1 12.5 H12.5" stroke="#000"/></svg>
<div class="t" style="left:220px;top:295px;">malte_demo</div>
<div class="t" style="left:494px;top:295px;width:47px;text-align:right">4,096</div>
<div class="t" style="left:550px;top:295px;width:45px;overflow:hidden">05/07/20</div>
<svg style="left:203px;top:313px" width="16" height="14"><path d="M0.5 0.5 H4 L5 1.5 H12.5 V12.5 H0.5Z" fill="#d8c898" stroke="#000" stroke-width="1"/><path d="M1 2 H4" stroke="#a8d0e0" stroke-width="1"/><path d="M1 2.5 H12 V8.5 H1Z" fill="#e0d4a8"/><path d="M1 9 H12 V12 H1Z" fill="#bcb49c"/><path d="M12.5 1.8 L14.5 3 V12.5 L12.5 13.5" fill="#c8b888" stroke="#000" stroke-width="1"/><path d="M1 12.5 H12.5" stroke="#000"/></svg>
<div class="a" style="left:597px;top:151px;width:15px;height:180px;background:#b4b4b4;border-left:1px solid #8a8a8a"></div>
<div class="vsb" style="left:597px;top:151px;width:15px;height:131px"></div>
<div class="a" style="left:597px;top:151px;width:15px;height:13px;background:linear-gradient(#f4f4f4,#dcdcdc);border:1px solid #fafafa;border-right-color:#8a8a8a;border-bottom-color:#8a8a8a"></div>
<svg style="left:600px;top:154px" width="9" height="7"><path d="M4.5 0 L9 4 L6 4 L6 7 L3 7 L3 4 L0 4Z" fill="#9c9c9c"/></svg>
<div class="a" style="left:5px;top:385px;width:612px;height:1px;background:#5a5a5a"></div>
<div class="a" style="left:6px;top:386px;width:610px;height:23px;background:#d8d8d8;border-top:1px solid #fafafa;border-left:1px solid #fafafa"></div>
<div class="a" style="left:5px;top:385px;width:1px;height:25px;background:#5a5a5a"></div>
<div class="a" style="left:5px;top:409px;width:612px;height:1px;background:#5a5a5a"></div>
<svg style="left:8px;top:388px" width="19" height="20"><path d="M5 1.5 L9 1.5 L11.5 4.5 V14 L9.5 14.5 H5 L1.5 9.5 L1.2 7.8 L4.5 6.5 Z" fill="#f8e4d4" stroke="#000" stroke-width="1.3" stroke-linejoin="round"/><path d="M6.5 3 V9 M8.5 3 V8" stroke="#d8b8a8" stroke-width="0.8"/><rect x="8.7" y="5.2" width="8" height="5.2" fill="#88b888" stroke="#000" stroke-width="1.3"/><path d="M10 7 H15" stroke="#c8e8c8"/><rect x="4.6" y="15.3" width="7.2" height="2.8" fill="#fff" stroke="#000" stroke-width="1.3"/></svg>
<div class="a" style="left:2px;top:410px;width:619px;height:3px;background:linear-gradient(#f8f8f8,#e0e0e0)"></div>
<div class="a" style="left:2px;top:410px;width:16px;height:3px;background:linear-gradient(90deg,#b0b0b0,#d8d8d8)"></div>
<div class="a" style="left:0px;top:415px;width:182px;height:323px;background:#d8d8d8"></div>
<div class="a" style="left:0px;top:415px;width:182px;height:9px;background:linear-gradient(#dfe2e8,#c4c8d0);border-bottom:1px solid #8a8e96"></div>
<div class="a" style="left:0px;top:424px;width:182px;height:6px;background:#d0d0d0"></div>
<div class="a" style="left:0px;top:430px;width:181px;height:41px;background:#000"></div>
<div class="t" style="right:1001px;top:433px;font-weight:bold;font-size:11px;color:#a8a8a8;letter-spacing:0">timal</div>
<div class="a" style="left:0px;top:471px;width:181px;height:55px;background:#c2c2c2;border-top:1px solid #e0e0e0"></div>
<div class="a" style="left:0px;top:526px;width:181px;height:1px;background:#f0f0f0"></div>
<div class="a" style="left:0px;top:527px;width:181px;height:206px;background:#d6d6d6"></div>
<div class="a" style="left:-20px;top:495px;width:48px;height:24px;background:linear-gradient(#dcdcf0,#a8a8c4);border:1px solid #5a5a5a;box-shadow:inset 1px 1px 0 #fff"></div>
<div class="b" style="right:1000px;top:501px;color:#111;letter-spacing:.9px">nd F</div>
<div class="a" style="left:44px;top:495px;width:44px;height:24px;background:linear-gradient(#f6f6f6,#d4d4d4);border:1px solid #5a5a5a;box-shadow:inset 1px 1px 0 #fff"></div>
<div class="b" style="left:44px;top:501px;width:44px;text-align:center;color:#111;letter-spacing:.9px">Mode</div>
<div class="a" style="left:161px;top:495px;width:40px;height:24px;background:linear-gradient(#f6f6f6,#d4d4d4);border:1px solid #5a5a5a;box-shadow:inset 1px 1px 0 #fff"></div>
<svg style="left:174px;top:502px" width="8" height="10"><path d="M7 0 L1 5 L7 10Z" fill="#111"/></svg>
<div class="a" style="left:-13px;top:537px;width:40px;height:25px;background:linear-gradient(#d8d8ea,#a8a8c0);border:1px solid #4a4a4a;box-shadow:inset 1px 1px 0 #fff,1px 1px 0 #fafafa"></div>
<div class="b" style="left:-13px;top:545px;width:40px;text-align:center;color:#d8d8e0;letter-spacing:.3px;font-size:11.5px;line-height:11px;text-shadow:-1px -1px 0 #8a8aa0;">D</div>
<div class="a" style="left:45px;top:537px;width:40px;height:25px;background:linear-gradient(#d8d8ea,#a8a8c0);border:1px solid #4a4a4a;box-shadow:inset 1px 1px 0 #fff,1px 1px 0 #fafafa"></div>
<div class="b" style="left:45px;top:545px;width:40px;text-align:center;color:#d8d8e0;letter-spacing:.3px;font-size:11.5px;line-height:11px;text-shadow:-1px -1px 0 #8a8aa0;">E</div>
<div class="a" style="left:103px;top:537px;width:40px;height:25px;background:linear-gradient(#d8d8ea,#a8a8c0);border:1px solid #4a4a4a;box-shadow:inset 1px 1px 0 #fff,1px 1px 0 #fafafa"></div>
<div class="b" style="left:103px;top:545px;width:40px;text-align:center;color:#d8d8e0;letter-spacing:.3px;font-size:11.5px;line-height:11px;text-shadow:-1px -1px 0 #8a8aa0;">F</div>
<div class="a" style="left:161px;top:537px;width:40px;height:25px;background:linear-gradient(#d8d8ea,#a8a8c0);border:1px solid #4a4a4a;box-shadow:inset 1px 1px 0 #fff,1px 1px 0 #fafafa"></div>
<div class="b" style="left:161px;top:545px;width:40px;text-align:center;color:#d8d8e0;letter-spacing:.3px;font-size:11.5px;line-height:11px;text-shadow:-1px -1px 0 #8a8aa0;">DEC</div>
<div class="a" style="left:-13px;top:567px;width:40px;height:25px;background:linear-gradient(#d8d8ea,#a8a8c0);border:1px solid #4a4a4a;box-shadow:inset 1px 1px 0 #fff,1px 1px 0 #fafafa"></div>
<div class="b" style="left:-13px;top:575px;width:40px;text-align:center;color:#d8d8e0;letter-spacing:.3px;font-size:11.5px;line-height:11px;text-shadow:-1px -1px 0 #8a8aa0;">A</div>
<div class="a" style="left:45px;top:567px;width:40px;height:25px;background:linear-gradient(#d8d8ea,#a8a8c0);border:1px solid #4a4a4a;box-shadow:inset 1px 1px 0 #fff,1px 1px 0 #fafafa"></div>
<div class="b" style="left:45px;top:575px;width:40px;text-align:center;color:#d8d8e0;letter-spacing:.3px;font-size:11.5px;line-height:11px;text-shadow:-1px -1px 0 #8a8aa0;">B</div>
<div class="a" style="left:103px;top:567px;width:40px;height:25px;background:linear-gradient(#d8d8ea,#a8a8c0);border:1px solid #4a4a4a;box-shadow:inset 1px 1px 0 #fff,1px 1px 0 #fafafa"></div>
<div class="b" style="left:103px;top:575px;width:40px;text-align:center;color:#d8d8e0;letter-spacing:.3px;font-size:11.5px;line-height:11px;text-shadow:-1px -1px 0 #8a8aa0;">C</div>
<div class="a" style="left:161px;top:567px;width:40px;height:25px;background:linear-gradient(#d8d8ea,#a8a8c0);border:1px solid #4a4a4a;box-shadow:inset 1px 1px 0 #fff,1px 1px 0 #fafafa"></div>
<div class="b" style="left:161px;top:575px;width:40px;text-align:center;color:#111;letter-spacing:.3px;font-size:11.5px;line-height:11px;">BIN</div>
<div class="a" style="left:-13px;top:597px;width:40px;height:25px;background:linear-gradient(#f6f6f6,#d4d4d4);border:1px solid #4a4a4a;box-shadow:inset 1px 1px 0 #fff,1px 1px 0 #fafafa"></div>
<div class="b" style="left:-13px;top:605px;width:40px;text-align:center;color:#111;letter-spacing:.3px;font-size:11.5px;line-height:11px;">7</div>
<div class="a" style="left:45px;top:597px;width:40px;height:25px;background:linear-gradient(#f6f6f6,#d4d4d4);border:1px solid #4a4a4a;box-shadow:inset 1px 1px 0 #fff,1px 1px 0 #fafafa"></div>
<div class="b" style="left:45px;top:605px;width:40px;text-align:center;color:#111;letter-spacing:.3px;font-size:11.5px;line-height:11px;">8</div>
<div class="a" style="left:103px;top:597px;width:40px;height:25px;background:linear-gradient(#f6f6f6,#d4d4d4);border:1px solid #4a4a4a;box-shadow:inset 1px 1px 0 #fff,1px 1px 0 #fafafa"></div>
<div class="b" style="left:103px;top:605px;width:40px;text-align:center;color:#111;letter-spacing:.3px;font-size:11.5px;line-height:11px;">9</div>
<div class="a" style="left:161px;top:597px;width:40px;height:25px;background:linear-gradient(#f6f6f6,#d4d4d4);border:1px solid #4a4a4a;box-shadow:inset 1px 1px 0 #fff,1px 1px 0 #fafafa"></div>
<div class="b" style="left:161px;top:605px;width:40px;text-align:center;color:#111;letter-spacing:.3px;font-size:11.5px;line-height:11px;">/</div>
<div class="a" style="left:-13px;top:627px;width:40px;height:25px;background:linear-gradient(#f6f6f6,#d4d4d4);border:1px solid #4a4a4a;box-shadow:inset 1px 1px 0 #fff,1px 1px 0 #fafafa"></div>
<div class="b" style="left:-13px;top:635px;width:40px;text-align:center;color:#111;letter-spacing:.3px;font-size:11.5px;line-height:11px;">4</div>
<div class="a" style="left:45px;top:627px;width:40px;height:25px;background:linear-gradient(#f6f6f6,#d4d4d4);border:1px solid #4a4a4a;box-shadow:inset 1px 1px 0 #fff,1px 1px 0 #fafafa"></div>
<div class="b" style="left:45px;top:635px;width:40px;text-align:center;color:#111;letter-spacing:.3px;font-size:11.5px;line-height:11px;">5</div>
<div class="a" style="left:103px;top:627px;width:40px;height:25px;background:linear-gradient(#f6f6f6,#d4d4d4);border:1px solid #4a4a4a;box-shadow:inset 1px 1px 0 #fff,1px 1px 0 #fafafa"></div>
<div class="b" style="left:103px;top:635px;width:40px;text-align:center;color:#111;letter-spacing:.3px;font-size:11.5px;line-height:11px;">6</div>
<div class="a" style="left:161px;top:627px;width:40px;height:25px;background:linear-gradient(#f6f6f6,#d4d4d4);border:1px solid #4a4a4a;box-shadow:inset 1px 1px 0 #fff,1px 1px 0 #fafafa"></div>
<div class="b" style="left:161px;top:635px;width:40px;text-align:center;color:#111;letter-spacing:.3px;font-size:11.5px;line-height:11px;">X</div>
<div class="a" style="left:-13px;top:657px;width:40px;height:25px;background:linear-gradient(#f6f6f6,#d4d4d4);border:1px solid #4a4a4a;box-shadow:inset 1px 1px 0 #fff,1px 1px 0 #fafafa"></div>
<div class="b" style="left:-13px;top:665px;width:40px;text-align:center;color:#111;letter-spacing:.3px;font-size:11.5px;line-height:11px;">1</div>
<div class="a" style="left:45px;top:657px;width:40px;height:25px;background:linear-gradient(#f6f6f6,#d4d4d4);border:1px solid #4a4a4a;box-shadow:inset 1px 1px 0 #fff,1px 1px 0 #fafafa"></div>
<div class="b" style="left:45px;top:665px;width:40px;text-align:center;color:#111;letter-spacing:.3px;font-size:11.5px;line-height:11px;">2</div>
<div class="a" style="left:103px;top:657px;width:40px;height:25px;background:linear-gradient(#f6f6f6,#d4d4d4);border:1px solid #4a4a4a;box-shadow:inset 1px 1px 0 #fff,1px 1px 0 #fafafa"></div>
<div class="b" style="left:103px;top:665px;width:40px;text-align:center;color:#111;letter-spacing:.3px;font-size:11.5px;line-height:11px;">3</div>
<div class="a" style="left:161px;top:657px;width:40px;height:25px;background:linear-gradient(#f6f6f6,#d4d4d4);border:1px solid #4a4a4a;box-shadow:inset 1px 1px 0 #fff,1px 1px 0 #fafafa"></div>
<div class="b" style="left:161px;top:665px;width:40px;text-align:center;color:#111;letter-spacing:.3px;font-size:11.5px;line-height:11px;">-</div>
<div class="a" style="left:-13px;top:687px;width:40px;height:25px;background:linear-gradient(#f6f6f6,#d4d4d4);border:1px solid #4a4a4a;box-shadow:inset 1px 1px 0 #fff,1px 1px 0 #fafafa"></div>
<div class="b" style="left:-13px;top:695px;width:40px;text-align:center;color:#111;letter-spacing:.3px;font-size:11.5px;line-height:11px;">0</div>
<div class="a" style="left:45px;top:687px;width:40px;height:25px;background:linear-gradient(#f6f6f6,#d4d4d4);border:1px solid #4a4a4a;box-shadow:inset 1px 1px 0 #fff,1px 1px 0 #fafafa"></div>
<div class="b" style="left:45px;top:695px;width:40px;text-align:center;color:#111;letter-spacing:.3px;font-size:11.5px;line-height:11px;">+/-</div>
<div class="a" style="left:103px;top:687px;width:40px;height:25px;background:linear-gradient(#f6f6f6,#d4d4d4);border:1px solid #4a4a4a;box-shadow:inset 1px 1px 0 #fff,1px 1px 0 #fafafa"></div>
<div class="b" style="left:103px;top:695px;width:40px;text-align:center;color:#111;letter-spacing:.3px;font-size:11.5px;line-height:11px;">.</div>
<div class="a" style="left:161px;top:687px;width:40px;height:25px;background:linear-gradient(#f6f6f6,#d4d4d4);border:1px solid #4a4a4a;box-shadow:inset 1px 1px 0 #fff,1px 1px 0 #fafafa"></div>
<div class="b" style="left:161px;top:695px;width:40px;text-align:center;color:#111;letter-spacing:.3px;font-size:11.5px;line-height:11px;">+</div>
<div class="a" style="left:0px;top:731px;width:181px;height:1px;background:#505050"></div>
<div class="a" style="left:0px;top:732px;width:181px;height:2px;background:#fafafa"></div>
<div class="a" style="left:0px;top:734px;width:181px;height:2px;background:linear-gradient(#b8b8b8,#404040)"></div>
<div class="a" style="left:0px;top:736px;width:181px;height:1px;background:#000"></div>
<div class="a" style="left:0px;top:737px;width:895px;height:1px;background:#a0a0a0"></div>
<div class="a" style="left:0px;top:738px;width:895px;height:1px;background:#fafafa"></div>
<div class="a" style="left:0px;top:739px;width:895px;height:3px;background:#d8d8d8"></div>
<div class="a" style="left:0px;top:742px;width:895px;height:1px;background:#505050"></div>
<div class="a" style="left:0px;top:743px;width:1024px;height:25px;background:#c4c4c4"></div>
<div class="a" style="left:0px;top:743px;width:86px;height:25px;background:#d8d8d8;border-top:1px solid #fafafa"></div>
<div class="a" style="left:86px;top:743px;width:1px;height:25px;background:#a0a0a0"></div>
<div class="a" style="left:87px;top:743px;width:2px;height:25px;background:#fafafa"></div>
<svg style="left:7px;top:744px" width="22" height="22"><rect x="5" y="5" width="12" height="12" fill="#c8a040" stroke="#6a5020" stroke-width="0.8"/><path d="M11 1 L21 11 L11 21 L1 11Z" fill="#e8c858" stroke="#8a6a20" stroke-width="1.1"/><path d="M11 3.5 L18.5 11 L11 18.5 L3.5 11Z" fill="#f8e898"/><path d="M6.5 11h5" stroke="#000" stroke-width="2.8"/><path d="M10.5 7 L15.5 11 L10.5 15Z" fill="#000"/></svg>
<div class="b" style="left:31px;top:750px;color:#383838;letter-spacing:.9px">Launch</div>
<div class="a" style="left:90px;top:746px;width:124px;height:21px;background:#f8f2e4;border:2px solid #000"></div>
<div class="a" style="left:214px;top:746px;width:1px;height:22px;background:#fafafa"></div>
<svg style="left:99px;top:747px" width="20" height="17"><path d="M2.5 0.5 H12.5 V10.5 H2.5Z" fill="#e8e8e8" stroke="#000"/><rect x="4" y="2" width="7" height="7" fill="#909090"/><rect x="5" y="3" width="4" height="3" fill="#d8d8d8"/><path d="M2.5 0.5 V12 M12.5 0.5 V12" stroke="#000"/><path d="M0.5 15.5 L3 12 H13 L15.5 15.5Z" fill="#d0d0d0" stroke="#000"/><path d="M13 11 Q17 12 15 15" fill="none" stroke="#000"/></svg>
<div class="t" style="left:122px;top:751px;">ttyp0: sh</div>
<div class="a" style="left:215px;top:745px;width:124px;height:23px;background:#d8d8d8;border-top:1px solid #a8a8a8;border-left:1px solid #a8a8a8;box-shadow:inset 1px 1px 0 #fafafa"></div>
<div class="a" style="left:339px;top:745px;width:1px;height:23px;background:#fafafa"></div>
<svg style="left:223px;top:746px" width="24" height="22"><rect x="3.5" y="2.5" width="14" height="14.5" rx="1" fill="#98a4d8" stroke="#000" stroke-width="1.3"/><rect x="5" y="4" width="11" height="3" fill="#000"/><rect x="5.3" y="8.6" width="1.1" height="1.1" fill="#000"/><rect x="7.2" y="8.6" width="1.1" height="1.1" fill="#000"/><rect x="9.1" y="8.6" width="1.1" height="1.1" fill="#000"/><rect x="11.0" y="8.6" width="1.1" height="1.1" fill="#000"/><rect x="12.9" y="8.6" width="1.1" height="1.1" fill="#e04020"/><rect x="14.8" y="8.6" width="1.1" height="1.1" fill="#e04020"/><rect x="5.3" y="10.5" width="1.1" height="1.1" fill="#000"/><rect x="7.2" y="10.5" width="1.1" height="1.1" fill="#000"/><rect x="9.1" y="10.5" width="1.1" height="1.1" fill="#000"/><rect x="11.0" y="10.5" width="1.1" height="1.1" fill="#000"/><rect x="12.9" y="10.5" width="1.1" height="1.1" fill="#000"/><rect x="14.8" y="10.5" width="1.1" height="1.1" fill="#000"/><rect x="5.3" y="12.4" width="1.1" height="1.1" fill="#000"/><rect x="7.2" y="12.4" width="1.1" height="1.1" fill="#000"/><rect x="9.1" y="12.4" width="1.1" height="1.1" fill="#000"/><rect x="11.0" y="12.4" width="1.1" height="1.1" fill="#000"/><rect x="12.9" y="12.4" width="1.1" height="1.1" fill="#000"/><rect x="14.8" y="12.4" width="1.1" height="1.1" fill="#000"/><rect x="5.3" y="14.3" width="1.1" height="1.1" fill="#000"/><rect x="7.2" y="14.3" width="1.1" height="1.1" fill="#000"/><rect x="9.1" y="14.3" width="1.1" height="1.1" fill="#000"/><rect x="11.0" y="14.3" width="1.1" height="1.1" fill="#000"/><rect x="12.9" y="14.3" width="1.1" height="1.1" fill="#000"/><rect x="14.8" y="14.3" width="1.1" height="1.1" fill="#000"/></svg>
<div class="t" style="left:249px;top:751px;">Basic Calcu...</div>
<div class="a" style="left:341px;top:745px;width:124px;height:23px;background:#d8d8d8;border-top:1px solid #a8a8a8;border-left:1px solid #a8a8a8;box-shadow:inset 1px 1px 0 #fafafa"></div>
<div class="a" style="left:465px;top:745px;width:1px;height:23px;background:#fafafa"></div>
<svg style="left:349px;top:746px" width="24" height="22"><rect x="2.5" y="1.5" width="11" height="16" rx="1" fill="#3a8ad0" stroke="#000" stroke-width="1.1"/><path d="M3 6.8 H13 M3 12 H13" stroke="#000" stroke-width="1.1"/><path d="M4 3.3 H12 M4 8.5 H12 M4 13.7 H12" stroke="#a0d4f8" stroke-width="1.4"/><path d="M5 5 H11 M5 10.3 H11 M5 15.5 H11" stroke="#1a5a90" stroke-width="1"/><path d="M11.5 10.5 L14 8.5 H21.5 V16 L19 18.5 H11.5Z" fill="#c8b078" stroke="#000" stroke-width="1.1"/><path d="M11.5 10.5 H19 L21.5 8.5 M19 10.5 V18.5" stroke="#000" fill="none"/><path d="M12.5 12 H18" stroke="#e0d0a0"/></svg>
<div class="t" style="left:375px;top:751px;">Photon File ...</div>
<div class="a" style="left:467px;top:745px;width:124px;height:23px;background:#d8d8d8;border-top:1px solid #a8a8a8;border-left:1px solid #a8a8a8;box-shadow:inset 1px 1px 0 #fafafa"></div>
<div class="a" style="left:591px;top:745px;width:1px;height:23px;background:#fafafa"></div>
<svg style="left:475px;top:746px" width="24" height="22"><path d="M9.5 1.5 H19.5 V12.5 H9.5Z" fill="#fafafa" stroke="#000" stroke-width="1.2"/><path d="M2.5 5.5 H16.5 V19.5 H3.5 L2.5 18.5Z" fill="#f0c030" stroke="#000" stroke-width="1.2"/><path d="M3.5 18.5 H16" stroke="#c89010" stroke-width="1.2"/><path d="M7 10 Q7 7.5 9.5 7.5 Q12 7.5 12 9.5 Q12 11 10 11.5 V13" fill="none" stroke="#000" stroke-width="1.5"/><rect x="9.2" y="14.3" width="1.6" height="1.6" fill="#000"/></svg>
<div class="t" style="left:501px;top:751px;">Helpviewer</div>
<svg style="left:584px;top:759px" width="6" height="6"><path d="M5 0 L5 5 L0 5Z" fill="#333"/></svg>
<div class="a" style="left:917px;top:743px;width:107px;height:25px;background:#dcdcdc;border-top:1px solid #fafafa;border-left:1px solid #fafafa"></div>
<div class="a" style="left:916px;top:743px;width:1px;height:25px;background:#a0a0a0"></div>
<div class="t" style="left:924px;top:750px;">Wed-22 03:08AM</div>
<div class="a" style="left:180px;top:316px;width:710px;height:421px;background:#000"></div>
<div class="a" style="left:182px;top:318px;width:706px;height:414px;background:#d8d8d8"></div>
<div class="a" style="left:182px;top:318px;width:29px;height:22px;background:linear-gradient(#f4f4f4,#d4d4d4);border-right:1px solid #9a9a9a;border-bottom:1px solid #9a9a9a"></div>
<svg style="left:185px;top:317px" width="24" height="24"><path d="M11.40 1.90 L13.85 5.39 L17.20 5.50 L17.31 8.85 L20.80 11.30 L17.31 13.75 L17.20 17.10 L13.85 17.21 L11.40 20.70 L8.95 17.21 L5.60 17.10 L5.49 13.75 L2.00 11.30 L5.49 8.85 L5.60 5.50 L8.95 5.39Z" fill="#f0b820" stroke="#1a1408" stroke-width="1.3"/><path d="M11.40 3.70 L13.39 6.50 L16.07 6.63 L16.20 9.31 L19.00 11.30 L16.20 13.29 L16.07 15.97 L13.39 16.10 L11.40 18.90 L9.41 16.10 L6.73 15.97 L6.60 13.29 L3.80 11.30 L6.60 9.31 L6.73 6.63 L9.41 6.50Z" fill="#f8d848"/><circle cx="11.4" cy="11.3" r="4.4" fill="#f0c830" stroke="#405070" stroke-width="1"/><path d="M11.2 7 V15.5" stroke="#1a1a1a" stroke-width="1.4"/><rect x="11.8" y="11.3" width="2.4" height="3" fill="#c02020"/></svg>
<div class="a" style="left:211px;top:318px;width:614px;height:22px;background:linear-gradient(#c4dcf4,#98c0e8 40%,#6aa0d8);border-left:1px solid #e8f4ff;border-top:1px solid #d8ecff;border-bottom:1px solid #3a6a9a"></div>
<div class="b" style="left:480px;top:323px;color:#000058;letter-spacing:1px">ttyp0: sh</div>
<div class="a" style="left:805px;top:333px;width:4px;height:6px;border-left:1px solid #e0f0ff;border-top:1px solid #e0f0ff;border-right:1px solid #5a8ab8"></div>
<div class="a" style="left:810px;top:329px;width:4px;height:10px;border-left:1px solid #e0f0ff;border-top:1px solid #e0f0ff;border-right:1px solid #5a8ab8"></div>
<div class="a" style="left:815px;top:325px;width:4px;height:14px;border-left:1px solid #e0f0ff;border-top:1px solid #e0f0ff;border-right:1px solid #5a8ab8"></div>
<div class="a" style="left:820px;top:318px;width:5px;height:21px;background:#d8d8d8"></div>
<div class="a" style="left:820px;top:318px;width:2px;height:21px;background:#000;border-radius:2px 0 0 2px"></div>
<div class="a" style="left:820px;top:318px;width:4px;height:1px;background:#000"></div>
<div class="a" style="left:820px;top:338px;width:4px;height:1px;background:#000"></div>
<div class="a" style="left:825px;top:318px;width:21px;height:22px;background:#d8d8d8;border-top:1px solid #fafafa;border-left:1px solid #fafafa;border-right:1px solid #bcbcbc"></div>
<div class="a" style="left:846px;top:318px;width:21px;height:22px;background:#d8d8d8;border-top:1px solid #fafafa;border-left:1px solid #fafafa;border-right:1px solid #bcbcbc"></div>
<div class="a" style="left:867px;top:318px;width:21px;height:22px;background:#d8d8d8;border-top:1px solid #fafafa;border-left:1px solid #fafafa;border-right:1px solid #bcbcbc"></div>
<svg style="left:828px;top:327px" width="16" height="8"><rect x="1" y="1.5" width="12" height="4" fill="#22a8f0" stroke="#0a1420" stroke-width="1.2"/></svg>
<svg style="left:849px;top:321px" width="14" height="14"><rect x="1.2" y="1.2" width="11" height="11" fill="#d8d8d8" stroke="#22a8f0" stroke-width="2.2"/><rect x="3" y="3" width="7" height="1.5" fill="#fafafa"/><path d="M1 13 L13 13 L13 1" fill="none" stroke="#0a1420" stroke-width="0.8"/></svg>
<svg style="left:871px;top:320px" width="14" height="14"><path d="M2 2 L12 12 M12 2 L2 12" stroke="#1a0a08" stroke-width="4"/><path d="M2 2 L12 12 M12 2 L2 12" stroke="#f06040" stroke-width="2.4"/></svg>
<div class="a" style="left:182px;top:340px;width:4px;height:396px;background:linear-gradient(90deg,#c8c8c8,#f8f8f8 60%,#e8e8e8)"></div>
<div class="a" style="left:185px;top:340px;width:681px;height:392px;background:#000"></div>
<div class="term" style="left:187px;top:345px">  196632   1 bin/login           10o REPLY       7
  249866   1 /photon/bin/Photon  10r RECEIVE     1
  278541   1 /photon/bin/phfont  10o JOIN        2
  278541   2 /photon/bin/phfont  10o RECEIVE     1
  290846   1 ton/bin/fontsleuth  10o RECEIVE     1
  290846   2 ton/bin/fontsleuth  10o SIGWAITINFO 
  290846   3 ton/bin/fontsleuth   6o READY       
  290846   4 ton/bin/fontsleuth  10o RECEIVE     1
  319521   1 on/bin/io-graphics  12r RECEIVE     1
  319521   2 on/bin/io-graphics  12r REPLY       290846
  319521   3 on/bin/io-graphics  12r REPLY       249866
  340002   1 ton/bin/devi-hirun  15o RECEIVE     1
  340002   2 ton/bin/devi-hirun  15o REPLY       7
  340002   3 ton/bin/devi-hirun  12o SIGWAITINFO 
  352284   1 bin/login           10o REPLY       7
  462879   1 usr/photon/bin/pwm  10r RECEIVE     1
  499749   1 r/photon/bin/pterm  10r RECEIVE     1
  507939   1 r/photon/bin/shelf  10r CONDVAR     806cebc
  507939   2 r/photon/bin/shelf  10r RECEIVE     1
  524326   1 bin/sh              10r SIGSUSPEND  
  544804   1 photon/bin/bkgdmgr  10r RECEIVE     1
  544807   1 hoton/bin/wmswitch  10r RECEIVE     2
  544808   1 r/photon/bin/saver  10r RECEIVE     1
  622617   1 usr/sbin/telnetd    10r SIGWAITINFO 
  626720   1 bin/sh              10r REPLY       122898
  684073   1 /photon/bin/phcalc  10r RECEIVE     2
  684074   1 usr/photon/bin/pfm  10r REPLY       249866
  684075   1 ton/bin/helpviewer  10r RECEIVE     1
  684076   1 n/bin/vserver.file  10r RECEIVE     1
  696349   1 bin/pidin           10r REPLY       1
# inetd
# pidin</div>
<div class="a" style="left:242px;top:725px;width:8px;height:3px;background:#b4b4b4"></div>
<div class="a" style="left:866px;top:340px;width:3px;height:392px;background:#e8e8e8;border-right:1px solid #555"></div>
<div class="a" style="left:868px;top:340px;width:17px;height:392px;background:#b4b4b4;border-right:1px solid #555"></div>
<div class="a" style="left:868px;top:340px;width:16px;height:15px;background:linear-gradient(#fafafa,#dcdcdc);border:1px solid #fafafa;border-right-color:#7a7a7a;border-bottom-color:#7a7a7a"></div>
<svg style="left:871px;top:343px" width="10" height="8"><path d="M5 0 L10 4.5 L7 4.5 L7 8 L3 8 L3 4.5 L0 4.5Z" fill="#333"/></svg>
<div class="vsb" style="left:868px;top:674px;width:16px;height:43px"></div>
<div class="a" style="left:868px;top:717px;width:16px;height:15px;background:linear-gradient(#fafafa,#dcdcdc);border:1px solid #fafafa;border-right-color:#7a7a7a;border-bottom-color:#7a7a7a"></div>
<svg style="left:871px;top:720px" width="10" height="8"><path d="M3 0 L7 0 L7 3.5 L10 3.5 L5 8 L0 3.5 L3 3.5Z" fill="#8a8a8a"/></svg>
<div class="a" style="left:885px;top:340px;width:3px;height:396px;background:linear-gradient(90deg,#fafafa,#d8d8d8 60%,#8a8a8a)"></div>
<div class="a" style="left:182px;top:732px;width:706px;height:4px;background:linear-gradient(#f4f4f4,#c8c8c8 35%,#8a8a8a 65%,#404040)"></div>
<svg width="0" height="0" style="left:0;top:0"><defs><linearGradient id="scr" x1="0" y1="0" x2="1" y2="1"><stop offset="0" stop-color="#f0f0f0"/><stop offset="1" stop-color="#505050"/></linearGradient></defs></svg>
<div class="a" style="left:890px;top:0px;width:1px;height:743px;background:#fafafa"></div>
<div class="a" style="left:891px;top:0px;width:3px;height:743px;background:#d8d8d8"></div>
<div class="a" style="left:894px;top:0px;width:1px;height:743px;background:#505050"></div>
<div class="a" style="left:895px;top:0px;width:129px;height:742px;background:#c2c2c2"></div>
<div class="a" style="left:895px;top:0px;width:129px;height:25px;background:#dcdcdc;border-top:1px solid #fafafa;border-left:1px solid #fafafa;border-bottom:1px solid #707070"></div>
<div class="a" style="left:896px;top:1px;width:29px;height:23px;background:#c8c8c8"></div>
<svg style="left:899px;top:1px" width="24" height="23"><path d="M2.5 2.5 H14.5 V13.5 H2.5Z" fill="#f4ecc0" stroke="#000" stroke-width="1.2"/><path d="M3.5 3.5 H13.5 V5 H3.5Z" fill="#fafafa"/><path d="M7.5 7.5 H20.5 V17.5 H7.5Z" fill="#e8ecf4" stroke="#000" stroke-width="1.2"/><path d="M9 11 H19 V15.5 H9Z" fill="#78b0e8" stroke="#3a6aa0" stroke-width="0.6"/><path d="M10.5 13h1M12.5 13h1M14.5 13h1M16.5 13h1" stroke="#fff"/></svg>
<div class="t" style="left:929px;top:7px;color:#111">Welcome</div>
<div class="a" style="left:895px;top:25px;width:129px;height:25px;background:#dcdcdc;border-top:1px solid #fafafa;border-left:1px solid #fafafa;border-bottom:1px solid #707070"></div>
<div class="a" style="left:896px;top:26px;width:29px;height:23px;background:#c8c8c8"></div>
<svg style="left:899px;top:26px" width="24" height="23"><path d="M9.5 1.5 H19.5 V12.5 H9.5Z" fill="#fafafa" stroke="#000" stroke-width="1.2"/><path d="M2.5 5.5 H16.5 V19.5 H3.5 L2.5 18.5Z" fill="#f0c030" stroke="#000" stroke-width="1.2"/><path d="M3.5 18.5 H16" stroke="#c89010" stroke-width="1.2"/><path d="M7 10 Q7 7.5 9.5 7.5 Q12 7.5 12 9.5 Q12 11 10 11.5 V13" fill="none" stroke="#000" stroke-width="1.5"/><rect x="9.2" y="14.3" width="1.6" height="1.6" fill="#000"/></svg>
<div class="t" style="left:929px;top:32px;color:#111">Help</div>
<div class="a" style="left:895px;top:50px;width:129px;height:19px;background:#dcdcdc;border-top:1px solid #fafafa;border-left:1px solid #fafafa;border-bottom:1px solid #707070"></div>
<div class="a" style="left:896px;top:51px;width:15px;height:17px;background:#c8c8c8"></div>
<svg style="left:900px;top:56px" width="8" height="8"><path d="M3.5 0v7M0 3.5h7" stroke="#505050" stroke-width="2"/></svg>
<div class="b" style="left:913px;top:54px;color:#111">Internet</div>
<div class="a" style="left:895px;top:69px;width:129px;height:19px;background:#dcdcdc;border-top:1px solid #fafafa;border-left:1px solid #fafafa;border-bottom:1px solid #707070"></div>
<div class="a" style="left:896px;top:70px;width:15px;height:17px;background:#c8c8c8"></div>
<div class="a" style="left:900px;top:77px;width:8px;height:2px;background:#505050"></div>
<div class="b" style="left:913px;top:73px;color:#111">Utilities</div>
<div class="a" style="left:895px;top:88px;width:129px;height:25px;background:#dcdcdc;border-top:1px solid #fafafa;border-left:1px solid #fafafa;border-bottom:1px solid #707070"></div>
<div class="a" style="left:896px;top:89px;width:29px;height:23px;background:#c8c8c8"></div>
<svg style="left:899px;top:89px" width="24" height="23"><rect x="2.5" y="1.5" width="11" height="16" rx="1" fill="#3a8ad0" stroke="#000" stroke-width="1.1"/><path d="M3 6.8 H13 M3 12 H13" stroke="#000" stroke-width="1.1"/><path d="M4 3.3 H12 M4 8.5 H12 M4 13.7 H12" stroke="#a0d4f8" stroke-width="1.4"/><path d="M5 5 H11 M5 10.3 H11 M5 15.5 H11" stroke="#1a5a90" stroke-width="1"/><path d="M11.5 10.5 L14 8.5 H21.5 V16 L19 18.5 H11.5Z" fill="#c8b078" stroke="#000" stroke-width="1.1"/><path d="M11.5 10.5 H19 L21.5 8.5 M19 10.5 V18.5" stroke="#000" fill="none"/><path d="M12.5 12 H18" stroke="#e0d0a0"/></svg>
<div class="t" style="left:929px;top:95px;color:#111">File Manager</div>
<div class="a" style="left:895px;top:113px;width:129px;height:25px;background:#dcdcdc;border-top:1px solid #fafafa;border-left:1px solid #fafafa;border-bottom:1px solid #707070"></div>
<div class="a" style="left:896px;top:114px;width:29px;height:23px;background:#c8c8c8"></div>
<svg style="left:899px;top:114px" width="24" height="23"><rect x="3.5" y="2.5" width="14" height="14.5" rx="1" fill="#98a4d8" stroke="#000" stroke-width="1.3"/><rect x="5" y="4" width="11" height="3" fill="#000"/><rect x="5.3" y="8.6" width="1.1" height="1.1" fill="#000"/><rect x="7.2" y="8.6" width="1.1" height="1.1" fill="#000"/><rect x="9.1" y="8.6" width="1.1" height="1.1" fill="#000"/><rect x="11.0" y="8.6" width="1.1" height="1.1" fill="#000"/><rect x="12.9" y="8.6" width="1.1" height="1.1" fill="#e04020"/><rect x="14.8" y="8.6" width="1.1" height="1.1" fill="#e04020"/><rect x="5.3" y="10.5" width="1.1" height="1.1" fill="#000"/><rect x="7.2" y="10.5" width="1.1" height="1.1" fill="#000"/><rect x="9.1" y="10.5" width="1.1" height="1.1" fill="#000"/><rect x="11.0" y="10.5" width="1.1" height="1.1" fill="#000"/><rect x="12.9" y="10.5" width="1.1" height="1.1" fill="#000"/><rect x="14.8" y="10.5" width="1.1" height="1.1" fill="#000"/><rect x="5.3" y="12.4" width="1.1" height="1.1" fill="#000"/><rect x="7.2" y="12.4" width="1.1" height="1.1" fill="#000"/><rect x="9.1" y="12.4" width="1.1" height="1.1" fill="#000"/><rect x="11.0" y="12.4" width="1.1" height="1.1" fill="#000"/><rect x="12.9" y="12.4" width="1.1" height="1.1" fill="#000"/><rect x="14.8" y="12.4" width="1.1" height="1.1" fill="#000"/><rect x="5.3" y="14.3" width="1.1" height="1.1" fill="#000"/><rect x="7.2" y="14.3" width="1.1" height="1.1" fill="#000"/><rect x="9.1" y="14.3" width="1.1" height="1.1" fill="#000"/><rect x="11.0" y="14.3" width="1.1" height="1.1" fill="#000"/><rect x="12.9" y="14.3" width="1.1" height="1.1" fill="#000"/><rect x="14.8" y="14.3" width="1.1" height="1.1" fill="#000"/></svg>
<div class="t" style="left:929px;top:120px;color:#111">Calculator</div>
<div class="a" style="left:895px;top:138px;width:129px;height:25px;background:#dcdcdc;border-top:1px solid #fafafa;border-left:1px solid #fafafa;border-bottom:1px solid #707070"></div>
<div class="a" style="left:896px;top:139px;width:29px;height:23px;background:#c8c8c8"></div>
<svg style="left:899px;top:139px" width="24" height="23"><path d="M1.5 7.5 L7 2 L10.5 5.5 L5 11Z" fill="#88c0f0" stroke="#204060"/><path d="M5 11 L10.5 5.5 L13 8 L7.5 13.5Z" fill="#5a98d8" stroke="#204060"/><circle cx="13" cy="12" r="4.3" fill="#b8d8f8" stroke="#000" stroke-width="1.4"/><path d="M11 10 Q12 9 14 9.5" stroke="#fff" fill="none"/><path d="M16 15 L20 19" stroke="#000" stroke-width="3.2"/><path d="M16.3 15.3 L19.7 18.7" stroke="#f0c030" stroke-width="1.6"/></svg>
<div class="t" style="left:929px;top:145px;color:#111">Region View</div>
<div class="a" style="left:895px;top:163px;width:129px;height:25px;background:#dcdcdc;border-top:1px solid #fafafa;border-left:1px solid #fafafa;border-bottom:1px solid #707070"></div>
<div class="a" style="left:896px;top:164px;width:29px;height:23px;background:#c8c8c8"></div>
<svg style="left:899px;top:164px" width="24" height="23"><path d="M3.5 2.5 H12 L14.5 5 V19.5 H3.5Z" fill="#fafafa" stroke="#000" stroke-width="1.2"/><path d="M5.5 6.5h6M5.5 9h6M5.5 11.5h6M5.5 14h5" stroke="#707070" stroke-width="1"/><path d="M11 18.5 L18.5 8 L21 10 L13.5 20.5 L10.5 21Z" fill="#f0c030" stroke="#000" stroke-width="1.1"/><path d="M18.5 8 L19.5 6.5 L22 8.5 L21 10Z" fill="#e08080" stroke="#000" stroke-width="1"/></svg>
<div class="t" style="left:929px;top:170px;color:#111">Editor</div>
<div class="a" style="left:895px;top:188px;width:129px;height:25px;background:#dcdcdc;border-top:1px solid #fafafa;border-left:1px solid #fafafa;border-bottom:1px solid #707070"></div>
<div class="a" style="left:896px;top:189px;width:29px;height:23px;background:#c8c8c8"></div>
<svg style="left:899px;top:189px" width="24" height="23"><path d="M4.5 2.5 H16.5 V14.5 H4.5Z" fill="#e8e8e8" stroke="#000" stroke-width="1.2"/><rect x="6" y="4" width="9" height="8" fill="url(#scr)"/><path d="M2.5 19.5 L4 15.5 H17 L18.5 19.5Z" fill="#e4e4e4" stroke="#000" stroke-width="1.1"/><path d="M5 17.5h11" stroke="#909090" stroke-dasharray="1 1"/><path d="M17 14 Q20 15 19 18" fill="none" stroke="#000"/></svg>
<div class="t" style="left:929px;top:195px;color:#111">Terminal</div>
<div class="a" style="left:895px;top:213px;width:129px;height:25px;background:#dcdcdc;border-top:1px solid #fafafa;border-left:1px solid #fafafa;border-bottom:1px solid #707070"></div>
<div class="a" style="left:896px;top:214px;width:29px;height:23px;background:#c8c8c8"></div>
<svg style="left:899px;top:214px" width="24" height="23"><path d="M4.5 2.5 H17.5 V14.5 H4.5Z" fill="#20d0f0" stroke="#000" stroke-width="1.2"/><rect x="6" y="4" width="10" height="8" fill="#000"/><path d="M7.5 6v3h2M12 7.5h2v2h-2z" stroke="#f0d020" fill="none"/><path d="M2.5 19.5 L4 15.5 H18 L19.5 19.5Z" fill="#20c0e0" stroke="#000" stroke-width="1.1"/><path d="M5 17.5h12" stroke="#000" stroke-dasharray="1 1"/></svg>
<div class="t" style="left:929px;top:220px;color:#111">Terminal Char...</div>
<div class="a" style="left:895px;top:238px;width:129px;height:25px;background:#dcdcdc;border-top:1px solid #fafafa;border-left:1px solid #fafafa;border-bottom:1px solid #707070"></div>
<div class="a" style="left:896px;top:239px;width:29px;height:23px;background:#c8c8c8"></div>
<svg style="left:899px;top:239px" width="24" height="23"><circle cx="13" cy="8.5" r="5.8" fill="#fafafa" stroke="#000" stroke-width="1.4"/><path d="M10 6.5 Q11.5 4.5 14 5" stroke="#c0c0c0" fill="none"/><path d="M8.8 12.8 L4 17.5" stroke="#000" stroke-width="3.4"/><path d="M8.6 13 L4.2 17.3" stroke="#f0c030" stroke-width="1.6"/></svg>
<div class="t" style="left:929px;top:245px;color:#111">Find...</div>
<div class="a" style="left:895px;top:263px;width:129px;height:25px;background:#dcdcdc;border-top:1px solid #fafafa;border-left:1px solid #fafafa;border-bottom:1px solid #707070"></div>
<div class="a" style="left:896px;top:264px;width:29px;height:23px;background:#c8c8c8"></div>
<svg style="left:899px;top:264px" width="24" height="23"><path d="M2.5 2.5 H12.5 V12.5 H2.5Z" fill="#e8e8e8" stroke="#000" stroke-width="1.2"/><circle cx="11" cy="11" r="4.3" fill="#c0d0e0" stroke="#000" stroke-width="1.4"/><path d="M14 14 L19 19" stroke="#000" stroke-width="3.2"/><path d="M14.3 14.3 L18.7 18.7" stroke="#f0c030" stroke-width="1.6"/></svg>
<div class="t" style="left:929px;top:270px;color:#111">System Infor...</div>
<div class="a" style="left:895px;top:288px;width:129px;height:25px;background:#dcdcdc;border-top:1px solid #fafafa;border-left:1px solid #fafafa;border-bottom:1px solid #707070"></div>
<div class="a" style="left:896px;top:289px;width:29px;height:23px;background:#c8c8c8"></div>
<svg style="left:899px;top:289px" width="24" height="23"><path d="M9.5 8.5 H21.5 V20.5 H9.5Z" fill="#fafafa" stroke="#000" stroke-width="1.1"/><path d="M11 10 H20 V19 H11Z" fill="#3a80c8"/><path d="M7.5 11.5 H15.5 V19.5 H7.5Z" fill="#fafafa" stroke="#000"/><path d="M9 13 H14 V18 H9Z" fill="#4a90d8"/><path d="M1.5 5 Q8 -1 15 5 V10 Q11 12 8 10 Q5 12 1.5 10Z" fill="#e85030" stroke="#000" stroke-width="1.1"/><path d="M4 6h3M10 6h3" stroke="#fafafa" stroke-width="1.6"/></svg>
<div class="t" style="left:929px;top:295px;color:#111">Image Viewer</div>
<div class="a" style="left:895px;top:313px;width:129px;height:25px;background:#dcdcdc;border-top:1px solid #fafafa;border-left:1px solid #fafafa;border-bottom:1px solid #707070"></div>
<div class="a" style="left:896px;top:314px;width:29px;height:23px;background:#c8c8c8"></div>
<svg style="left:899px;top:314px" width="24" height="23"><path d="M2.5 8.5 H13.5 V20.5 H2.5Z" fill="#fafafa" stroke="#000" stroke-width="1.1"/><path d="M4 10 H12 V19 H4Z" fill="#3a80c8"/><path d="M6.5 7.5 H20.5 V17.5 H6.5Z" fill="#e8e8e8" stroke="#000" stroke-width="1.1"/><path d="M8 11 H19 V16 H8Z" fill="#d0d0d0"/><path d="M12 12 L15 12 L13.5 14Z" fill="#000"/><path d="M13 2v3M10.5 3 L11.5 5M15.5 3 L14.5 5" stroke="#000" stroke-width="0.8"/></svg>
<div class="t" style="left:929px;top:320px;color:#111">Snapshot</div>
<div class="a" style="left:895px;top:338px;width:129px;height:19px;background:#dcdcdc;border-top:1px solid #fafafa;border-left:1px solid #fafafa;border-bottom:1px solid #707070"></div>
<div class="a" style="left:896px;top:339px;width:15px;height:17px;background:#c8c8c8"></div>
<div class="a" style="left:900px;top:346px;width:8px;height:2px;background:#505050"></div>
<div class="b" style="left:913px;top:342px;color:#111">Multimedia</div>
<div class="a" style="left:895px;top:357px;width:129px;height:25px;background:#dcdcdc;border-top:1px solid #fafafa;border-left:1px solid #fafafa;border-bottom:1px solid #707070"></div>
<div class="a" style="left:896px;top:358px;width:29px;height:23px;background:#c8c8c8"></div>
<svg style="left:899px;top:358px" width="24" height="23"><path d="M3.5 8.5 H7.5 L12.5 3.5 V19.5 L7.5 14.5 H3.5Z" fill="#e8e8e8" stroke="#000" stroke-width="1.1"/><circle cx="4.5" cy="11.5" r="2" fill="#f0c030" stroke="#000" stroke-width="0.8"/><path d="M10 5 V18" stroke="#fff" stroke-width="1.5"/><path d="M15 6 Q18 11.5 15 17 M17.5 4 Q21.5 11.5 17.5 19" fill="none" stroke="#000" stroke-width="1.1"/></svg>
<div class="t" style="left:929px;top:364px;color:#111">Audio Player</div>
<div class="a" style="left:895px;top:382px;width:129px;height:25px;background:#dcdcdc;border-top:1px solid #fafafa;border-left:1px solid #fafafa;border-bottom:1px solid #707070"></div>
<div class="a" style="left:896px;top:383px;width:29px;height:23px;background:#c8c8c8"></div>
<svg style="left:899px;top:383px" width="24" height="23"><path d="M3.5 8.5 H7.5 L12.5 3.5 V19.5 L7.5 14.5 H3.5Z" fill="#e8e8e8" stroke="#000" stroke-width="1.1"/><circle cx="4.5" cy="11.5" r="2" fill="#f0c030" stroke="#000" stroke-width="0.8"/><path d="M10 5 V18" stroke="#fff" stroke-width="1.5"/><path d="M15 6 Q18 11.5 15 17 M17.5 4 Q21.5 11.5 17.5 19" fill="none" stroke="#000" stroke-width="1.1"/></svg>
<div class="t" style="left:929px;top:389px;color:#111">Media Player</div>
<div class="a" style="left:895px;top:407px;width:129px;height:25px;background:#dcdcdc;border-top:1px solid #fafafa;border-left:1px solid #fafafa;border-bottom:1px solid #707070"></div>
<div class="a" style="left:896px;top:408px;width:29px;height:23px;background:#c8c8c8"></div>
<svg style="left:899px;top:408px" width="24" height="23"><rect x="3.5" y="7.5" width="15" height="12" rx="2" fill="#6878a8" stroke="#000" stroke-width="1.2"/><rect x="5.5" y="11" width="9" height="5" fill="#c0c8e0"/><path d="M7 12.5v2M9.5 12v3M12 13v1.5" stroke="#000"/><path d="M6 2.5v5M9 2.5v5M12 2.5v5M15 2.5v5" stroke="#000" stroke-width="1.2"/><path d="M5 3h2M8 3h2M11 3h2M14 3h2" stroke="#f0c030" stroke-width="1.6"/><path d="M16.5 10v1M16.5 13v1M16.5 16v1" stroke="#f0c030"/></svg>
<div class="t" style="left:929px;top:414px;color:#111">Mixer</div>
<div class="a" style="left:895px;top:432px;width:129px;height:25px;background:#dcdcdc;border-top:1px solid #fafafa;border-left:1px solid #fafafa;border-bottom:1px solid #707070"></div>
<div class="a" style="left:896px;top:433px;width:29px;height:23px;background:#c8c8c8"></div>
<svg style="left:899px;top:433px" width="24" height="23"><rect x="6.5" y="1.5" width="9" height="12" rx="4.5" fill="#e8e8e8" stroke="#000" stroke-width="1.1"/><path d="M8.5 5h1M11.5 5h1M8.5 7.5h1M11.5 7.5h1M8.5 10h1M11.5 10h1" stroke="#909090"/><path d="M4.5 9 V12 Q4.5 17 11 17 Q17.5 17 17.5 12 V9" fill="none" stroke="#000" stroke-width="2.4"/><path d="M4.5 9 V12 Q4.5 17 11 17 Q17.5 17 17.5 12 V9" fill="none" stroke="#f0c030" stroke-width="1"/><path d="M11 17 V20 M7 20.5 H15" stroke="#000" stroke-width="2"/><path d="M7.5 20.5 H14.5" stroke="#f0c030" stroke-width="0.8"/></svg>
<div class="t" style="left:929px;top:439px;color:#111">Sound Recorder</div>
<div class="a" style="left:895px;top:457px;width:129px;height:19px;background:#dcdcdc;border-top:1px solid #fafafa;border-left:1px solid #fafafa;border-bottom:1px solid #707070"></div>
<div class="a" style="left:896px;top:458px;width:15px;height:17px;background:#c8c8c8"></div>
<svg style="left:900px;top:463px" width="8" height="8"><path d="M3.5 0v7M0 3.5h7" stroke="#505050" stroke-width="2"/></svg>
<div class="b" style="left:913px;top:461px;color:#111">Games</div>
<div class="a" style="left:895px;top:476px;width:129px;height:19px;background:#dcdcdc;border-top:1px solid #fafafa;border-left:1px solid #fafafa;border-bottom:1px solid #707070"></div>
<div class="a" style="left:896px;top:477px;width:15px;height:17px;background:#c8c8c8"></div>
<svg style="left:900px;top:482px" width="8" height="8"><path d="M3.5 0v7M0 3.5h7" stroke="#505050" stroke-width="2"/></svg>
<div class="b" style="left:913px;top:480px;color:#111">Configure</div>
<div class="a" style="left:895px;top:495px;width:129px;height:85px;background:#c2c2c2;border-bottom:1px solid #5a5a5a"></div>
<div class="a" style="left:895px;top:580px;width:129px;height:25px;background:#dcdcdc;border-top:1px solid #fafafa;border-left:1px solid #fafafa;border-bottom:1px solid #707070"></div>
<div class="a" style="left:896px;top:581px;width:29px;height:23px;background:#c8c8c8"></div>
<svg style="left:899px;top:581px" width="24" height="23"><path d="M2.5 2.5 H14.5 V13.5 H2.5Z" fill="#f4ecc0" stroke="#000" stroke-width="1.2"/><path d="M3.5 3.5 H13.5 V5 H3.5Z" fill="#fafafa"/><path d="M7.5 7.5 H20.5 V17.5 H7.5Z" fill="#e8ecf4" stroke="#000" stroke-width="1.2"/><path d="M9 11 H19 V15.5 H9Z" fill="#78b0e8" stroke="#3a6aa0" stroke-width="0.6"/><path d="M10.5 13h1M12.5 13h1M14.5 13h1M16.5 13h1" stroke="#fff"/></svg>
<div class="t" style="left:929px;top:587px;color:#111">Mount Helios</div>
<div class="a" style="left:895px;top:605px;width:129px;height:19px;background:#dcdcdc;border-top:1px solid #fafafa;border-left:1px solid #fafafa;border-bottom:1px solid #707070"></div>
<div class="a" style="left:896px;top:606px;width:15px;height:17px;background:#c8c8c8"></div>
<div class="a" style="left:900px;top:613px;width:8px;height:2px;background:#505050"></div>
<div class="b" style="left:913px;top:609px;color:#111">System Monitor</div>
<div class="a" style="left:895px;top:624px;width:129px;height:80px;background:#dcdcdc;border-top:1px solid #fafafa;border-left:1px solid #fafafa;border-bottom:1px solid #707070"></div>
<svg style="left:898px;top:627px" width="18" height="18"><rect x="3" y="3" width="12" height="12" fill="#333" stroke="#e8b020" stroke-width="2" stroke-dasharray="1.5 1"/><rect x="5" y="5" width="8" height="8" fill="#505050"/></svg>
<svg style="left:898px;top:647px" width="18" height="16"><rect x="1" y="4" width="16" height="8" fill="#587858" stroke="#222"/><rect x="3" y="6" width="3" height="3" fill="#888"/><rect x="8" y="6" width="3" height="3" fill="#888"/><path d="M2 12h14" stroke="#e0b020" stroke-width="1.5"/></svg>
<svg style="left:898px;top:665px" width="20" height="19"><rect x="2" y="1" width="11" height="15" fill="#e8e4d8" stroke="#222"/><path d="M6 8 L15 8 L15 18" fill="none" stroke="#e0a020" stroke-width="1.5"/></svg>
<svg style="left:898px;top:686px" width="19" height="13"><rect x="1" y="1" width="17" height="11" fill="#e8e4d8" stroke="#333"/><path d="M3 4h13M3 7h13M3 9h13" stroke="#999" stroke-width="0.8"/></svg>
<div class="a" style="left:918px;top:628px;width:102px;height:16px;background:#b8b8b8;border:1px solid #4a4a4a"></div>
<div class="a" style="left:919px;top:629px;width:36px;height:14px;background:#d8cfb8;border-right:1px solid #4a4a4a;box-shadow:inset 1px 1px 0 #f8f8f8"></div>
<div class="a" style="left:918px;top:647px;width:102px;height:16px;background:#b8b8b8;border:1px solid #4a4a4a"></div>
<div class="a" style="left:919px;top:648px;width:50px;height:14px;background:#b4c6ae;border-right:1px solid #4a4a4a;box-shadow:inset 1px 1px 0 #f8f8f8"></div>
<div class="a" style="left:918px;top:666px;width:102px;height:7px;background:#b8b8b8;border:1px solid #4a4a4a"></div>
<div class="a" style="left:918px;top:674px;width:102px;height:7px;background:#b8b8b8;border:1px solid #4a4a4a"></div>
<div class="a" style="left:918px;top:685px;width:102px;height:7px;background:#b8b8b8;border:1px solid #4a4a4a"></div>
<div class="a" style="left:918px;top:693px;width:102px;height:7px;background:#b8b8b8;border:1px solid #4a4a4a"></div>
<div class="a" style="left:895px;top:704px;width:129px;height:19px;background:#dcdcdc;border-top:1px solid #fafafa;border-left:1px solid #fafafa;border-bottom:1px solid #707070"></div>
<div class="a" style="left:896px;top:705px;width:15px;height:17px;background:#c8c8c8"></div>
<svg style="left:900px;top:710px" width="8" height="8"><path d="M3.5 0v7M0 3.5h7" stroke="#505050" stroke-width="2"/></svg>
<div class="b" style="left:913px;top:708px;color:#111">CD Player</div>
<div class="a" style="left:895px;top:723px;width:129px;height:19px;background:#dcdcdc;border-top:1px solid #fafafa;border-left:1px solid #fafafa;border-bottom:1px solid #707070"></div>
<div class="a" style="left:896px;top:724px;width:15px;height:17px;background:#c8c8c8"></div>
<svg style="left:900px;top:729px" width="8" height="8"><path d="M3.5 0v7M0 3.5h7" stroke="#505050" stroke-width="2"/></svg>
<div class="b" style="left:913px;top:727px;color:#111">World View</div>
</body></html>
